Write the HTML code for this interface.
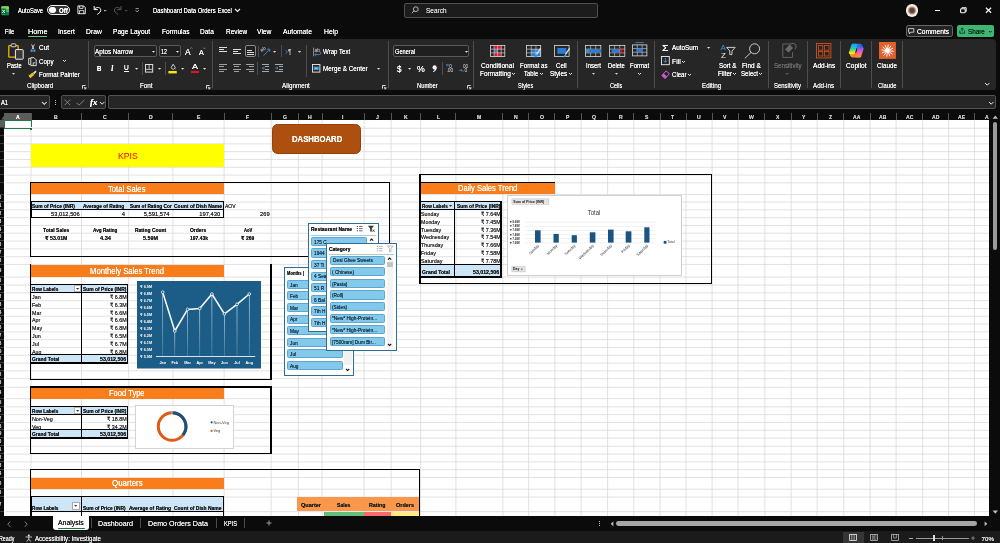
<!DOCTYPE html>
<html><head><meta charset="utf-8"><title>Dashboard Data Orders Excel</title>
<style>
html,body{margin:0;padding:0;background:#0b0b0b;}
#app{opacity:.999;position:relative;width:1000px;height:543px;overflow:hidden;background:#0b0b0b;font-family:"Liberation Sans","DejaVu Sans",sans-serif;}
#app>div,#app>svg{position:absolute;}
#app>svg{overflow:visible;}
.t{white-space:nowrap;transform-origin:0 50%;text-shadow:0 0 .45px;}
.d{text-shadow:0 0 .25px;}
.n{text-shadow:none;}
</style></head><body><div id="app">
<div style="left:4.2px;top:120px;width:985px;height:395.8px;background:#fff;"></div>
<svg style="left:4.2px;top:120px;" width="985" height="395.8" viewBox="0 0 985 395.8"><path d="M27 0V395.8M77.5 0V395.8M124.7 0V395.8M168.9 0V395.8M220.1 0V395.8M267.1 0V395.8M294.4 0V395.8M318.1 0V395.8M360.1 0V395.8M387.1 0V395.8M416.6 0V395.8M451.9 0V395.8M498.9 0V395.8M524.7 0V395.8M550.9 0V395.8M577.1 0V395.8M603.6 0V395.8M629.8 0V395.8M656.1 0V395.8M682 0V395.8M708.1 0V395.8M734.1 0V395.8M760.9 0V395.8M787.1 0V395.8M813.1 0V395.8M839.8 0V395.8M866.1 0V395.8M892.1 0V395.8M918.7 0V395.8M944.6 0V395.8M970.4 0V395.8M1.5 8.25H985M1.5 16.05H985M1.5 23.85H985M1.5 31.65H985M1.5 39.45H985M1.5 47.25H985M1.5 55.05H985M1.5 62.85H985M1.5 74.55H985M1.5 82.05H985M1.5 89.85H985M1.5 97.65H985M1.5 105.45H985M1.5 113.25H985M1.5 121.05H985M1.5 128.85H985M1.5 136.65H985M1.5 144.45H985M1.5 157.05H985M1.5 165.05H985M1.5 172.85H985M1.5 180.65H985M1.5 188.45H985M1.5 196.25H985M1.5 204.05H985M1.5 211.85H985M1.5 219.65H985M1.5 227.45H985M1.5 235.25H985M1.5 243.05H985M1.5 250.85H985M1.5 258.65H985M1.5 267.25H985M1.5 278.65H985M1.5 286.85H985M1.5 294.65H985M1.5 302.45H985M1.5 310.25H985M1.5 318.05H985M1.5 326.25H985M1.5 334.05H985M1.5 341.85H985M1.5 349.65H985M1.5 357.45H985M1.5 369.25H985M1.5 377.05H985M1.5 391.65H985" stroke="#d4d4d4" stroke-width="0.7" fill="none"/></svg>
<div style="left:0px;top:112.6px;width:1000px;height:7.4px;background:#0b0b0b;"></div>
<div style="left:4.2px;top:113px;width:26.7px;height:7px;background:#5c5c5c;"></div>
<div class="t" style="left:15.7px;top:114px;font-size:5.4px;line-height:6px;color:#fff;font-weight:bold;transform:scaleX(0.950);">A</div>
<div class="t" style="left:54.3px;top:114px;font-size:5.4px;line-height:6px;color:#c8c8c8;font-weight:bold;transform:scaleX(0.950);">B</div>
<div style="left:30.5px;top:113.4px;width:0.8px;height:6.6px;background:#555;"></div>
<div class="t" style="left:103.15px;top:114px;font-size:5.4px;line-height:6px;color:#c8c8c8;font-weight:bold;transform:scaleX(0.950);">C</div>
<div style="left:81px;top:113.4px;width:0.8px;height:6.6px;background:#555;"></div>
<div class="t" style="left:148.85px;top:114px;font-size:5.4px;line-height:6px;color:#c8c8c8;font-weight:bold;transform:scaleX(0.950);">D</div>
<div style="left:128.2px;top:113.4px;width:0.8px;height:6.6px;background:#555;"></div>
<div class="t" style="left:196.69px;top:114px;font-size:5.4px;line-height:6px;color:#c8c8c8;font-weight:bold;transform:scaleX(0.950);">E</div>
<div style="left:172.4px;top:113.4px;width:0.8px;height:6.6px;background:#555;"></div>
<div class="t" style="left:245.93px;top:114px;font-size:5.4px;line-height:6px;color:#c8c8c8;font-weight:bold;transform:scaleX(0.950);">F</div>
<div style="left:223.6px;top:113.4px;width:0.8px;height:6.6px;background:#555;"></div>
<div class="t" style="left:282.65px;top:114px;font-size:5.4px;line-height:6px;color:#c8c8c8;font-weight:bold;transform:scaleX(0.950);">G</div>
<div style="left:270.6px;top:113.4px;width:0.8px;height:6.6px;background:#555;"></div>
<div class="t" style="left:308.3px;top:114px;font-size:5.4px;line-height:6px;color:#c8c8c8;font-weight:bold;transform:scaleX(0.950);">H</div>
<div style="left:297.9px;top:113.4px;width:0.8px;height:6.6px;background:#555;"></div>
<div class="t" style="left:342.29px;top:114px;font-size:5.4px;line-height:6px;color:#c8c8c8;font-weight:bold;transform:scaleX(0.950);">I</div>
<div style="left:321.6px;top:113.4px;width:0.8px;height:6.6px;background:#555;"></div>
<div class="t" style="left:376.07px;top:114px;font-size:5.4px;line-height:6px;color:#c8c8c8;font-weight:bold;transform:scaleX(0.950);">J</div>
<div style="left:363.6px;top:113.4px;width:0.8px;height:6.6px;background:#555;"></div>
<div class="t" style="left:403.9px;top:114px;font-size:5.4px;line-height:6px;color:#c8c8c8;font-weight:bold;transform:scaleX(0.950);">K</div>
<div style="left:390.6px;top:113.4px;width:0.8px;height:6.6px;background:#555;"></div>
<div class="t" style="left:436.58px;top:114px;font-size:5.4px;line-height:6px;color:#c8c8c8;font-weight:bold;transform:scaleX(0.950);">L</div>
<div style="left:420.1px;top:113.4px;width:0.8px;height:6.6px;background:#555;"></div>
<div class="t" style="left:477.16px;top:114px;font-size:5.4px;line-height:6px;color:#c8c8c8;font-weight:bold;transform:scaleX(0.950);">M</div>
<div style="left:455.4px;top:113.4px;width:0.8px;height:6.6px;background:#555;"></div>
<div class="t" style="left:513.85px;top:114px;font-size:5.4px;line-height:6px;color:#c8c8c8;font-weight:bold;transform:scaleX(0.950);">N</div>
<div style="left:502.4px;top:113.4px;width:0.8px;height:6.6px;background:#555;"></div>
<div class="t" style="left:539.7px;top:114px;font-size:5.4px;line-height:6px;color:#c8c8c8;font-weight:bold;transform:scaleX(0.950);">O</div>
<div style="left:528.2px;top:113.4px;width:0.8px;height:6.6px;background:#555;"></div>
<div class="t" style="left:566.19px;top:114px;font-size:5.4px;line-height:6px;color:#c8c8c8;font-weight:bold;transform:scaleX(0.950);">P</div>
<div style="left:554.4px;top:113.4px;width:0.8px;height:6.6px;background:#555;"></div>
<div class="t" style="left:592.25px;top:114px;font-size:5.4px;line-height:6px;color:#c8c8c8;font-weight:bold;transform:scaleX(0.950);">Q</div>
<div style="left:580.6px;top:113.4px;width:0.8px;height:6.6px;background:#555;"></div>
<div class="t" style="left:618.75px;top:114px;font-size:5.4px;line-height:6px;color:#c8c8c8;font-weight:bold;transform:scaleX(0.950);">R</div>
<div style="left:607.1px;top:113.4px;width:0.8px;height:6.6px;background:#555;"></div>
<div class="t" style="left:645.14px;top:114px;font-size:5.4px;line-height:6px;color:#c8c8c8;font-weight:bold;transform:scaleX(0.950);">S</div>
<div style="left:633.3px;top:113.4px;width:0.8px;height:6.6px;background:#555;"></div>
<div class="t" style="left:671.38px;top:114px;font-size:5.4px;line-height:6px;color:#c8c8c8;font-weight:bold;transform:scaleX(0.950);">T</div>
<div style="left:659.6px;top:113.4px;width:0.8px;height:6.6px;background:#555;"></div>
<div class="t" style="left:697.1px;top:114px;font-size:5.4px;line-height:6px;color:#c8c8c8;font-weight:bold;transform:scaleX(0.950);">U</div>
<div style="left:685.5px;top:113.4px;width:0.8px;height:6.6px;background:#555;"></div>
<div class="t" style="left:723.29px;top:114px;font-size:5.4px;line-height:6px;color:#c8c8c8;font-weight:bold;transform:scaleX(0.950);">V</div>
<div style="left:711.6px;top:113.4px;width:0.8px;height:6.6px;background:#555;"></div>
<div class="t" style="left:748.98px;top:114px;font-size:5.4px;line-height:6px;color:#c8c8c8;font-weight:bold;transform:scaleX(0.950);">W</div>
<div style="left:737.6px;top:113.4px;width:0.8px;height:6.6px;background:#555;"></div>
<div class="t" style="left:776.19px;top:114px;font-size:5.4px;line-height:6px;color:#c8c8c8;font-weight:bold;transform:scaleX(0.950);">X</div>
<div style="left:764.4px;top:113.4px;width:0.8px;height:6.6px;background:#555;"></div>
<div class="t" style="left:802.29px;top:114px;font-size:5.4px;line-height:6px;color:#c8c8c8;font-weight:bold;transform:scaleX(0.950);">Y</div>
<div style="left:790.6px;top:113.4px;width:0.8px;height:6.6px;background:#555;"></div>
<div class="t" style="left:828.78px;top:114px;font-size:5.4px;line-height:6px;color:#c8c8c8;font-weight:bold;transform:scaleX(0.950);">Z</div>
<div style="left:816.6px;top:113.4px;width:0.8px;height:6.6px;background:#555;"></div>
<div class="t" style="left:853.15px;top:114px;font-size:5.4px;line-height:6px;color:#c8c8c8;font-weight:bold;transform:scaleX(0.950);">AA</div>
<div style="left:843.3px;top:113.4px;width:0.8px;height:6.6px;background:#555;"></div>
<div class="t" style="left:879.3px;top:114px;font-size:5.4px;line-height:6px;color:#c8c8c8;font-weight:bold;transform:scaleX(0.950);">AB</div>
<div style="left:869.6px;top:113.4px;width:0.8px;height:6.6px;background:#555;"></div>
<div class="t" style="left:905.6px;top:114px;font-size:5.4px;line-height:6px;color:#c8c8c8;font-weight:bold;transform:scaleX(0.950);">AC</div>
<div style="left:895.6px;top:113.4px;width:0.8px;height:6.6px;background:#555;"></div>
<div class="t" style="left:931.85px;top:114px;font-size:5.4px;line-height:6px;color:#c8c8c8;font-weight:bold;transform:scaleX(0.950);">AD</div>
<div style="left:922.2px;top:113.4px;width:0.8px;height:6.6px;background:#555;"></div>
<div class="t" style="left:957.84px;top:114px;font-size:5.4px;line-height:6px;color:#c8c8c8;font-weight:bold;transform:scaleX(0.950);">AE</div>
<div style="left:948.1px;top:113.4px;width:0.8px;height:6.6px;background:#555;"></div>
<div class="t" style="left:984.8px;top:114px;font-size:5.4px;line-height:6px;color:#c8c8c8;font-weight:bold;transform:scaleX(0.950);">AF</div>
<div style="left:973.9px;top:113.4px;width:0.8px;height:6.6px;background:#555;"></div>
<div style="left:0px;top:120px;width:4.2px;height:395.8px;background:#0b0b0b;"></div>
<div style="left:0px;top:120px;width:4.2px;height:7.8px;background:#5c5c5c;"></div>
<div style="left:0px;top:127.4px;width:3.6px;height:0.8px;background:#3a3a3a;"></div>
<div style="left:0px;top:135.2px;width:3.6px;height:0.8px;background:#3a3a3a;"></div>
<div style="left:0px;top:143px;width:3.6px;height:0.8px;background:#3a3a3a;"></div>
<div style="left:0px;top:150.8px;width:3.6px;height:0.8px;background:#3a3a3a;"></div>
<div style="left:0px;top:158.6px;width:3.6px;height:0.8px;background:#3a3a3a;"></div>
<div style="left:0px;top:166.4px;width:3.6px;height:0.8px;background:#3a3a3a;"></div>
<div style="left:0px;top:174.2px;width:3.6px;height:0.8px;background:#3a3a3a;"></div>
<div style="left:0px;top:182px;width:3.6px;height:0.8px;background:#3a3a3a;"></div>
<div style="left:0px;top:193.7px;width:3.6px;height:0.8px;background:#3a3a3a;"></div>
<div style="left:0px;top:201.2px;width:3.6px;height:0.8px;background:#3a3a3a;"></div>
<div style="left:0px;top:209px;width:3.6px;height:0.8px;background:#3a3a3a;"></div>
<div style="left:0px;top:216.8px;width:3.6px;height:0.8px;background:#3a3a3a;"></div>
<div style="left:0px;top:224.6px;width:3.6px;height:0.8px;background:#3a3a3a;"></div>
<div style="left:0px;top:232.4px;width:3.6px;height:0.8px;background:#3a3a3a;"></div>
<div style="left:0px;top:240.2px;width:3.6px;height:0.8px;background:#3a3a3a;"></div>
<div style="left:0px;top:248px;width:3.6px;height:0.8px;background:#3a3a3a;"></div>
<div style="left:0px;top:255.8px;width:3.6px;height:0.8px;background:#3a3a3a;"></div>
<div style="left:0px;top:263.6px;width:3.6px;height:0.8px;background:#3a3a3a;"></div>
<div style="left:0px;top:276.2px;width:3.6px;height:0.8px;background:#3a3a3a;"></div>
<div style="left:0px;top:284.2px;width:3.6px;height:0.8px;background:#3a3a3a;"></div>
<div style="left:0px;top:292px;width:3.6px;height:0.8px;background:#3a3a3a;"></div>
<div style="left:0px;top:299.8px;width:3.6px;height:0.8px;background:#3a3a3a;"></div>
<div style="left:0px;top:307.6px;width:3.6px;height:0.8px;background:#3a3a3a;"></div>
<div style="left:0px;top:315.4px;width:3.6px;height:0.8px;background:#3a3a3a;"></div>
<div style="left:0px;top:323.2px;width:3.6px;height:0.8px;background:#3a3a3a;"></div>
<div style="left:0px;top:331px;width:3.6px;height:0.8px;background:#3a3a3a;"></div>
<div style="left:0px;top:338.8px;width:3.6px;height:0.8px;background:#3a3a3a;"></div>
<div style="left:0px;top:346.6px;width:3.6px;height:0.8px;background:#3a3a3a;"></div>
<div style="left:0px;top:354.4px;width:3.6px;height:0.8px;background:#3a3a3a;"></div>
<div style="left:0px;top:362.2px;width:3.6px;height:0.8px;background:#3a3a3a;"></div>
<div style="left:0px;top:370px;width:3.6px;height:0.8px;background:#3a3a3a;"></div>
<div style="left:0px;top:377.8px;width:3.6px;height:0.8px;background:#3a3a3a;"></div>
<div style="left:0px;top:386.4px;width:3.6px;height:0.8px;background:#3a3a3a;"></div>
<div style="left:0px;top:397.8px;width:3.6px;height:0.8px;background:#3a3a3a;"></div>
<div style="left:0px;top:406px;width:3.6px;height:0.8px;background:#3a3a3a;"></div>
<div style="left:0px;top:413.8px;width:3.6px;height:0.8px;background:#3a3a3a;"></div>
<div style="left:0px;top:421.6px;width:3.6px;height:0.8px;background:#3a3a3a;"></div>
<div style="left:0px;top:429.4px;width:3.6px;height:0.8px;background:#3a3a3a;"></div>
<div style="left:0px;top:437.2px;width:3.6px;height:0.8px;background:#3a3a3a;"></div>
<div style="left:0px;top:445.4px;width:3.6px;height:0.8px;background:#3a3a3a;"></div>
<div style="left:0px;top:453.2px;width:3.6px;height:0.8px;background:#3a3a3a;"></div>
<div style="left:0px;top:461px;width:3.6px;height:0.8px;background:#3a3a3a;"></div>
<div style="left:0px;top:468.8px;width:3.6px;height:0.8px;background:#3a3a3a;"></div>
<div style="left:0px;top:476.6px;width:3.6px;height:0.8px;background:#3a3a3a;"></div>
<div style="left:0px;top:488.4px;width:3.6px;height:0.8px;background:#3a3a3a;"></div>
<div style="left:0px;top:496.2px;width:3.6px;height:0.8px;background:#3a3a3a;"></div>
<div style="left:0px;top:510.8px;width:3.6px;height:0.8px;background:#3a3a3a;"></div>
<div class="t" style="left:-0.6px;top:195px;font-size:4.6px;line-height:5px;color:#c4c4c4;font-weight:bold;transform:scaleX(0.900);">0</div>
<div class="t" style="left:-0.6px;top:203px;font-size:4.6px;line-height:5px;color:#c4c4c4;font-weight:bold;transform:scaleX(0.900);">1</div>
<div class="t" style="left:-0.6px;top:211px;font-size:4.6px;line-height:5px;color:#c4c4c4;font-weight:bold;transform:scaleX(0.900);">2</div>
<div class="t" style="left:-0.6px;top:219px;font-size:4.6px;line-height:5px;color:#c4c4c4;font-weight:bold;transform:scaleX(0.900);">3</div>
<div class="t" style="left:-0.6px;top:227px;font-size:4.6px;line-height:5px;color:#c4c4c4;font-weight:bold;transform:scaleX(0.900);">4</div>
<div class="t" style="left:-0.6px;top:234px;font-size:4.6px;line-height:5px;color:#c4c4c4;font-weight:bold;transform:scaleX(0.900);">5</div>
<div class="t" style="left:-0.6px;top:242px;font-size:4.6px;line-height:5px;color:#c4c4c4;font-weight:bold;transform:scaleX(0.900);">6</div>
<div class="t" style="left:-0.6px;top:250px;font-size:4.6px;line-height:5px;color:#c4c4c4;font-weight:bold;transform:scaleX(0.900);">7</div>
<div class="t" style="left:-0.6px;top:258px;font-size:4.6px;line-height:5px;color:#c4c4c4;font-weight:bold;transform:scaleX(0.900);">8</div>
<div class="t" style="left:-0.6px;top:268px;font-size:4.6px;line-height:5px;color:#c4c4c4;font-weight:bold;transform:scaleX(0.900);">9</div>
<div class="t" style="left:-0.6px;top:278px;font-size:4.6px;line-height:5px;color:#c4c4c4;font-weight:bold;transform:scaleX(0.900);">0</div>
<div class="t" style="left:-0.6px;top:286px;font-size:4.6px;line-height:5px;color:#c4c4c4;font-weight:bold;transform:scaleX(0.900);">1</div>
<div class="t" style="left:-0.6px;top:294px;font-size:4.6px;line-height:5px;color:#c4c4c4;font-weight:bold;transform:scaleX(0.900);">2</div>
<div class="t" style="left:-0.6px;top:302px;font-size:4.6px;line-height:5px;color:#c4c4c4;font-weight:bold;transform:scaleX(0.900);">3</div>
<div class="t" style="left:-0.6px;top:310px;font-size:4.6px;line-height:5px;color:#c4c4c4;font-weight:bold;transform:scaleX(0.900);">4</div>
<div class="t" style="left:-0.6px;top:317px;font-size:4.6px;line-height:5px;color:#c4c4c4;font-weight:bold;transform:scaleX(0.900);">5</div>
<div class="t" style="left:-0.6px;top:325px;font-size:4.6px;line-height:5px;color:#c4c4c4;font-weight:bold;transform:scaleX(0.900);">6</div>
<div class="t" style="left:-0.6px;top:333px;font-size:4.6px;line-height:5px;color:#c4c4c4;font-weight:bold;transform:scaleX(0.900);">7</div>
<div class="t" style="left:-0.6px;top:341px;font-size:4.6px;line-height:5px;color:#c4c4c4;font-weight:bold;transform:scaleX(0.900);">8</div>
<div class="t" style="left:-0.6px;top:349px;font-size:4.6px;line-height:5px;color:#c4c4c4;font-weight:bold;transform:scaleX(0.900);">9</div>
<div class="t" style="left:-0.6px;top:356px;font-size:4.6px;line-height:5px;color:#c4c4c4;font-weight:bold;transform:scaleX(0.900);">0</div>
<div class="t" style="left:-0.6px;top:364px;font-size:4.6px;line-height:5px;color:#c4c4c4;font-weight:bold;transform:scaleX(0.900);">1</div>
<div class="t" style="left:-0.6px;top:372px;font-size:4.6px;line-height:5px;color:#c4c4c4;font-weight:bold;transform:scaleX(0.900);">2</div>
<div class="t" style="left:-0.6px;top:380px;font-size:4.6px;line-height:5px;color:#c4c4c4;font-weight:bold;transform:scaleX(0.900);">3</div>
<div class="t" style="left:-0.6px;top:390px;font-size:4.6px;line-height:5px;color:#c4c4c4;font-weight:bold;transform:scaleX(0.900);">4</div>
<div class="t" style="left:-0.6px;top:400px;font-size:4.6px;line-height:5px;color:#c4c4c4;font-weight:bold;transform:scaleX(0.900);">5</div>
<div class="t" style="left:-0.6px;top:408px;font-size:4.6px;line-height:5px;color:#c4c4c4;font-weight:bold;transform:scaleX(0.900);">6</div>
<div class="t" style="left:-0.6px;top:416px;font-size:4.6px;line-height:5px;color:#c4c4c4;font-weight:bold;transform:scaleX(0.900);">7</div>
<div class="t" style="left:-0.6px;top:424px;font-size:4.6px;line-height:5px;color:#c4c4c4;font-weight:bold;transform:scaleX(0.900);">8</div>
<div class="t" style="left:-0.6px;top:431px;font-size:4.6px;line-height:5px;color:#c4c4c4;font-weight:bold;transform:scaleX(0.900);">9</div>
<div class="t" style="left:-0.6px;top:439px;font-size:4.6px;line-height:5px;color:#c4c4c4;font-weight:bold;transform:scaleX(0.900);">0</div>
<div class="t" style="left:-0.6px;top:447px;font-size:4.6px;line-height:5px;color:#c4c4c4;font-weight:bold;transform:scaleX(0.900);">1</div>
<div class="t" style="left:-0.6px;top:455px;font-size:4.6px;line-height:5px;color:#c4c4c4;font-weight:bold;transform:scaleX(0.900);">2</div>
<div class="t" style="left:-0.6px;top:463px;font-size:4.6px;line-height:5px;color:#c4c4c4;font-weight:bold;transform:scaleX(0.900);">3</div>
<div class="t" style="left:-0.6px;top:471px;font-size:4.6px;line-height:5px;color:#c4c4c4;font-weight:bold;transform:scaleX(0.900);">4</div>
<div class="t" style="left:-0.6px;top:481px;font-size:4.6px;line-height:5px;color:#c4c4c4;font-weight:bold;transform:scaleX(0.900);">5</div>
<div class="t" style="left:-0.6px;top:490px;font-size:4.6px;line-height:5px;color:#c4c4c4;font-weight:bold;transform:scaleX(0.900);">6</div>
<div class="t" style="left:-0.6px;top:502px;font-size:4.6px;line-height:5px;color:#c4c4c4;font-weight:bold;transform:scaleX(0.900);">7</div>
<div style="left:0px;top:112.6px;width:4.2px;height:7.4px;background:#0b0b0b;"></div>
<svg style="left:0.6px;top:114.6px;" width="3.6" height="5" viewBox="0 0 3.6 5"><path d="M3.4 0.6 V4.4 H0.2 Z" fill="#666"/></svg>
<div style="left:989.2px;top:112.6px;width:10.8px;height:403.2px;background:#0b0b0b;"></div>
<svg style="left:991.6px;top:115.4px;" width="6.6" height="4.2" viewBox="0 0 6.6 4.2"><path d="M0.6 3.8 L3.3 0.4 L6 3.8 Z" fill="#bbb"/></svg>
<div style="left:992.9px;top:122px;width:4px;height:128.4px;background:#9b9b9b;border-radius:2px;"></div>
<svg style="left:991.6px;top:510.4px;" width="6.6" height="4.4" viewBox="0 0 6.6 4.4"><path d="M0.6 0.4 L3.3 3.8 L6 0.4 Z" fill="#bbb"/></svg>
<div style="left:4px;top:120px;width:27.6px;height:9px;border:1.2px solid #1f7a45;box-sizing:border-box;"></div>
<div style="left:29.6px;top:127.2px;width:2.6px;height:2.8px;background:#fff;"></div>
<div style="left:30px;top:127.6px;width:2px;height:2.2px;background:#1b6b3c;"></div>
<div style="left:272.2px;top:123.9px;width:89px;height:30.2px;background:#ad4f0e;border:0.8px solid #93420b;box-sizing:border-box;border-radius:5.5px;"></div>
<div class="t" style="left:291.54px;top:134px;font-size:8.6px;line-height:10px;color:#fff;font-weight:bold;transform:scaleX(0.900);">DASHBOARD</div>
<div style="left:30.5px;top:143.9px;width:193.5px;height:23.3px;background:#ffff00;"></div>
<div class="t n" style="left:117.5px;top:150px;font-size:9.9px;line-height:11px;color:#ff0000;transform:scaleX(0.882);">KPIS</div>
<div style="left:30px;top:182.05px;width:360.3px;height:1.3px;background:#000;"></div>
<div style="left:30px;top:255.95px;width:360.3px;height:1.1px;background:#000;"></div>
<div style="left:30.05px;top:182.1px;width:1.1px;height:75px;background:#000;"></div>
<div style="left:388.9px;top:182.1px;width:1.6px;height:75px;background:#000;"></div>
<div style="left:31.1px;top:183.3px;width:192.9px;height:10.8px;background:#f97d1b;"></div>
<div class="t" style="left:108.3px;top:184px;font-size:8.6px;line-height:10px;color:#fff;transform:scaleX(0.891);">Total Sales</div>
<div style="left:31.3px;top:201.6px;width:192.7px;height:7.8px;background:#cde6f7;"></div>
<div style="left:30.6px;top:201.15px;width:193.8px;height:0.9px;background:#000;"></div>
<div style="left:30.6px;top:209px;width:193.8px;height:0.8px;background:#000;"></div>
<div style="left:30.6px;top:216.5px;width:193.8px;height:1.4px;background:#000;"></div>
<div style="left:30.55px;top:201.6px;width:0.9px;height:15.6px;background:#000;"></div>
<div style="left:222.9px;top:201.6px;width:1.4px;height:16.2px;background:#000;"></div>
<div class="t" style="left:32px;top:203px;font-size:5.6px;line-height:6px;color:#1c1c1c;font-weight:bold;transform:scaleX(0.875);">Sum of Price (INR)</div>
<div class="t" style="left:83px;top:203px;font-size:5.6px;line-height:6px;color:#1c1c1c;font-weight:bold;transform:scaleX(0.866);">Average of Rating</div>
<div class="t" style="left:130px;top:203px;font-size:5.6px;line-height:6px;color:#1c1c1c;font-weight:bold;transform:scaleX(0.850);">Sum of Rating Cor</div>
<div class="t" style="left:173.8px;top:203px;font-size:5.6px;line-height:6px;color:#1c1c1c;font-weight:bold;transform:scaleX(0.897);">Count of Dish Name</div>
<div class="t" style="left:225px;top:203px;font-size:5.4px;line-height:6px;color:#2a2a2a;transform:scaleX(0.921);">AOV</div>
<div class="t" style="left:50.56px;top:211px;font-size:5.8px;line-height:6px;color:#2a2a2a;transform:scaleX(0.990);">53,012,506</div>
<div class="t" style="left:121.77px;top:211px;font-size:5.8px;line-height:6px;color:#2a2a2a;">4</div>
<div class="t" style="left:143.75px;top:211px;font-size:5.8px;line-height:6px;color:#2a2a2a;">5,591,574</div>
<div class="t" style="left:199.24px;top:211px;font-size:5.8px;line-height:6px;color:#2a2a2a;">197,430</div>
<div class="t" style="left:260.42px;top:211px;font-size:5.8px;line-height:6px;color:#2a2a2a;transform:scaleX(0.990);">269</div>
<div class="t" style="left:43px;top:227px;font-size:5.6px;line-height:6px;color:#1c1c1c;font-weight:bold;transform:scaleX(0.902);">Total Sales</div>
<div class="t" style="left:93px;top:227px;font-size:5.6px;line-height:6px;color:#1c1c1c;font-weight:bold;transform:scaleX(0.835);">Avg Rating</div>
<div class="t" style="left:135px;top:227px;font-size:5.6px;line-height:6px;color:#1c1c1c;font-weight:bold;transform:scaleX(0.891);">Rating Count</div>
<div class="t" style="left:190px;top:227px;font-size:5.6px;line-height:6px;color:#1c1c1c;font-weight:bold;transform:scaleX(0.888);">Orders</div>
<div class="t" style="left:244.3px;top:227px;font-size:5.6px;line-height:6px;color:#1c1c1c;font-weight:bold;transform:scaleX(0.732);">AoV</div>
<div class="t" style="left:45px;top:235px;font-size:5.6px;line-height:6px;color:#1c1c1c;font-weight:bold;transform:scaleX(0.932);">₹ 53.01M</div>
<div class="t" style="left:100px;top:235px;font-size:5.6px;line-height:6px;color:#1c1c1c;font-weight:bold;">4.34</div>
<div class="t" style="left:143px;top:235px;font-size:5.6px;line-height:6px;color:#1c1c1c;font-weight:bold;transform:scaleX(0.964);">5.59M</div>
<div class="t" style="left:189.5px;top:235px;font-size:5.6px;line-height:6px;color:#1c1c1c;font-weight:bold;transform:scaleX(0.889);">197.43k</div>
<div class="t" style="left:240.5px;top:235px;font-size:5.6px;line-height:6px;color:#1c1c1c;font-weight:bold;transform:scaleX(0.899);">₹ 269</div>
<div style="left:30px;top:378.5px;width:241.5px;height:1.2px;background:#000;"></div>
<div style="left:30.05px;top:264.3px;width:1.1px;height:115.4px;background:#000;"></div>
<div style="left:270.2px;top:264.3px;width:1.4px;height:115.4px;background:#000;"></div>
<div style="left:31.1px;top:264.9px;width:192.7px;height:11.9px;background:#f97d1b;"></div>
<div class="t" style="left:89.7px;top:266px;font-size:8.6px;line-height:10px;color:#fff;transform:scaleX(0.891);">Monthely Sales Trend</div>
<div style="left:31.3px;top:284.6px;width:96px;height:7.8px;background:#cde6f7;"></div>
<div style="left:73.8px;top:285.4px;width:7px;height:6.4px;background:#fff;border:0.5px solid #b5b5b5;box-sizing:border-box;"></div>
<div class="t" style="left:32.2px;top:286px;font-size:5.6px;line-height:6px;color:#1c1c1c;font-weight:bold;transform:scaleX(0.845);">Row Labels</div>
<svg style="left:75.65px;top:287.89px;" width="3.3" height="1.82" viewBox="0 0 3.3 1.82"><path d="M0 0 L3.3 0 L1.65 1.81 Z" fill="#333"/></svg>
<div class="t" style="left:83.2px;top:286px;font-size:5.6px;line-height:6px;color:#1c1c1c;font-weight:bold;transform:scaleX(0.883);">Sum of Price (INR)</div>
<div class="t d" style="left:32px;top:294px;font-size:5.8px;line-height:6px;color:#2a2a2a;transform:scaleX(0.920);">Jan</div>
<div class="t d" style="left:109.96px;top:294px;font-size:5.8px;line-height:6px;color:#2a2a2a;transform:scaleX(0.920);">₹ 6.8M</div>
<div class="t d" style="left:32px;top:302px;font-size:5.8px;line-height:6px;color:#2a2a2a;transform:scaleX(0.920);">Feb</div>
<div class="t d" style="left:109.96px;top:302px;font-size:5.8px;line-height:6px;color:#2a2a2a;transform:scaleX(0.920);">₹ 6.3M</div>
<div class="t d" style="left:32px;top:310px;font-size:5.8px;line-height:6px;color:#2a2a2a;transform:scaleX(0.920);">Mar</div>
<div class="t d" style="left:109.96px;top:310px;font-size:5.8px;line-height:6px;color:#2a2a2a;transform:scaleX(0.920);">₹ 6.6M</div>
<div class="t d" style="left:32px;top:317px;font-size:5.8px;line-height:6px;color:#2a2a2a;transform:scaleX(0.920);">Apr</div>
<div class="t d" style="left:109.96px;top:317px;font-size:5.8px;line-height:6px;color:#2a2a2a;transform:scaleX(0.920);">₹ 6.6M</div>
<div class="t d" style="left:32px;top:325px;font-size:5.8px;line-height:6px;color:#2a2a2a;transform:scaleX(0.920);">May</div>
<div class="t d" style="left:109.96px;top:325px;font-size:5.8px;line-height:6px;color:#2a2a2a;transform:scaleX(0.920);">₹ 6.8M</div>
<div class="t d" style="left:32px;top:333px;font-size:5.8px;line-height:6px;color:#2a2a2a;transform:scaleX(0.920);">Jun</div>
<div class="t d" style="left:109.96px;top:333px;font-size:5.8px;line-height:6px;color:#2a2a2a;transform:scaleX(0.920);">₹ 6.5M</div>
<div class="t d" style="left:32px;top:341px;font-size:5.8px;line-height:6px;color:#2a2a2a;transform:scaleX(0.920);">Jul</div>
<div class="t d" style="left:109.96px;top:341px;font-size:5.8px;line-height:6px;color:#2a2a2a;transform:scaleX(0.920);">₹ 6.7M</div>
<div class="t d" style="left:32px;top:349px;font-size:5.8px;line-height:6px;color:#2a2a2a;transform:scaleX(0.920);">Aug</div>
<div class="t d" style="left:109.96px;top:349px;font-size:5.8px;line-height:6px;color:#2a2a2a;transform:scaleX(0.920);">₹ 6.8M</div>
<div style="left:31.3px;top:355.3px;width:49.7px;height:7.3px;background:#cde6f7;"></div>
<div style="left:82.4px;top:355.3px;width:44.9px;height:7.3px;background:#cde6f7;"></div>
<div class="t" style="left:32.2px;top:356px;font-size:5.6px;line-height:6px;color:#1c1c1c;font-weight:bold;transform:scaleX(0.880);">Grand Total</div>
<div class="t" style="left:99.67px;top:356px;font-size:5.8px;line-height:6px;color:#1c1c1c;font-weight:bold;transform:scaleX(0.900);">53,012,506</div>
<div style="left:30.7px;top:284.1px;width:97.2px;height:1px;background:#000;"></div>
<div style="left:30.7px;top:291.95px;width:97.2px;height:0.9px;background:#000;"></div>
<div style="left:30.7px;top:354.3px;width:97.2px;height:1px;background:#000;"></div>
<div style="left:30.7px;top:362.28px;width:97.2px;height:1.25px;background:#000;"></div>
<div style="left:81.02px;top:284.6px;width:1.15px;height:78px;background:#000;"></div>
<div style="left:126.67px;top:284.6px;width:1.25px;height:78.9px;background:#000;"></div>
<svg style="left:136.8px;top:281px;font-family:'Liberation Sans','DejaVu Sans',sans-serif;" width="124" height="87.5" viewBox="0 0 124 87.5"><defs><linearGradient id="dl" x1="0" y1="0" x2="0" y2="1"><stop offset="0" stop-color="#d8e6ef" stop-opacity="0.95"/><stop offset="1" stop-color="#d8e6ef" stop-opacity="0.25"/></linearGradient></defs><rect width="124" height="87.5" fill="#1c5d87"/><rect x="25.35" y="11.2" width="0.7" height="64.3" fill="url(#dl)"/><rect x="37.45" y="50" width="0.7" height="25.5" fill="url(#dl)"/><rect x="50.25" y="28.4" width="0.7" height="47.1" fill="url(#dl)"/><rect x="62.35" y="27.5" width="0.7" height="48" fill="url(#dl)"/><rect x="74.55" y="13" width="0.7" height="62.5" fill="url(#dl)"/><rect x="87.05" y="32.9" width="0.7" height="42.6" fill="url(#dl)"/><rect x="99.65" y="23.3" width="0.7" height="52.2" fill="url(#dl)"/><rect x="111.95" y="13" width="0.7" height="62.5" fill="url(#dl)"/><path d="M19 75.5H118.2" stroke="#eef3f6" stroke-width="0.9"/><polyline points="25.7,11.2 37.8,50 50.6,28.4 62.7,27.5 74.9,13 87.4,32.9 100,23.3 112.3,13" fill="none" stroke="#fff" stroke-width="1.5" stroke-linejoin="round"/><circle cx="25.7" cy="11.2" r="1.35" fill="#1c5d87" stroke="#fff" stroke-width="0.75"/><circle cx="37.8" cy="50" r="1.35" fill="#1c5d87" stroke="#fff" stroke-width="0.75"/><circle cx="50.6" cy="28.4" r="1.35" fill="#1c5d87" stroke="#fff" stroke-width="0.75"/><circle cx="62.7" cy="27.5" r="1.35" fill="#1c5d87" stroke="#fff" stroke-width="0.75"/><circle cx="74.9" cy="13" r="1.35" fill="#1c5d87" stroke="#fff" stroke-width="0.75"/><circle cx="87.4" cy="32.9" r="1.35" fill="#1c5d87" stroke="#fff" stroke-width="0.75"/><circle cx="100" cy="23.3" r="1.35" fill="#1c5d87" stroke="#fff" stroke-width="0.75"/><circle cx="112.3" cy="13" r="1.35" fill="#1c5d87" stroke="#fff" stroke-width="0.75"/><text x="3.1" y="6.8" font-size="3.7" font-weight="bold" fill="#fff" textLength="12" lengthAdjust="spacingAndGlyphs">₹ 6.9M</text><text x="3.1" y="13.8" font-size="3.7" font-weight="bold" fill="#fff" textLength="12" lengthAdjust="spacingAndGlyphs">₹ 6.8M</text><text x="3.1" y="20.8" font-size="3.7" font-weight="bold" fill="#fff" textLength="12" lengthAdjust="spacingAndGlyphs">₹ 6.7M</text><text x="3.1" y="27.8" font-size="3.7" font-weight="bold" fill="#fff" textLength="12" lengthAdjust="spacingAndGlyphs">₹ 6.6M</text><text x="3.1" y="34.8" font-size="3.7" font-weight="bold" fill="#fff" textLength="12" lengthAdjust="spacingAndGlyphs">₹ 6.5M</text><text x="3.1" y="41.8" font-size="3.7" font-weight="bold" fill="#fff" textLength="12" lengthAdjust="spacingAndGlyphs">₹ 6.4M</text><text x="3.1" y="48.8" font-size="3.7" font-weight="bold" fill="#fff" textLength="12" lengthAdjust="spacingAndGlyphs">₹ 6.3M</text><text x="3.1" y="55.8" font-size="3.7" font-weight="bold" fill="#fff" textLength="12" lengthAdjust="spacingAndGlyphs">₹ 6.2M</text><text x="3.1" y="62.8" font-size="3.7" font-weight="bold" fill="#fff" textLength="12" lengthAdjust="spacingAndGlyphs">₹ 6.1M</text><text x="3.1" y="69.8" font-size="3.7" font-weight="bold" fill="#fff" textLength="12" lengthAdjust="spacingAndGlyphs">₹ 6.0M</text><text x="3.1" y="76.8" font-size="3.7" font-weight="bold" fill="#fff" textLength="12" lengthAdjust="spacingAndGlyphs">₹ 5.9M</text><text x="25.7" y="82.9" font-size="3.8" font-weight="bold" fill="#fff" text-anchor="middle">Jan</text><text x="37.8" y="82.9" font-size="3.8" font-weight="bold" fill="#fff" text-anchor="middle">Feb</text><text x="50.6" y="82.9" font-size="3.8" font-weight="bold" fill="#fff" text-anchor="middle">Mar</text><text x="62.7" y="82.9" font-size="3.8" font-weight="bold" fill="#fff" text-anchor="middle">Apr</text><text x="74.9" y="82.9" font-size="3.8" font-weight="bold" fill="#fff" text-anchor="middle">May</text><text x="87.4" y="82.9" font-size="3.8" font-weight="bold" fill="#fff" text-anchor="middle">Jun</text><text x="100" y="82.9" font-size="3.8" font-weight="bold" fill="#fff" text-anchor="middle">Jul</text><text x="112.3" y="82.9" font-size="3.8" font-weight="bold" fill="#fff" text-anchor="middle">Aug</text></svg>
<div style="left:30px;top:386.25px;width:241.5px;height:1.3px;background:#000;"></div>
<div style="left:30px;top:452.95px;width:241.5px;height:1.1px;background:#000;"></div>
<div style="left:30.05px;top:386.3px;width:1.1px;height:67.8px;background:#000;"></div>
<div style="left:270.2px;top:386.3px;width:1.4px;height:67.8px;background:#000;"></div>
<div style="left:31.1px;top:387.5px;width:192.7px;height:11.4px;background:#f97d1b;"></div>
<div class="t" style="left:109.2px;top:388px;font-size:8.6px;line-height:10px;color:#fff;transform:scaleX(0.879);">Food Type</div>
<div style="left:31.3px;top:406.4px;width:96px;height:7.8px;background:#cde6f7;"></div>
<div style="left:73.8px;top:407.2px;width:7px;height:6.4px;background:#fff;border:0.5px solid #b5b5b5;box-sizing:border-box;"></div>
<div class="t" style="left:32.2px;top:408px;font-size:5.6px;line-height:6px;color:#1c1c1c;font-weight:bold;transform:scaleX(0.845);">Row Labels</div>
<svg style="left:75.65px;top:409.69px;" width="3.3" height="1.82" viewBox="0 0 3.3 1.82"><path d="M0 0 L3.3 0 L1.65 1.81 Z" fill="#333"/></svg>
<div class="t" style="left:83.2px;top:408px;font-size:5.6px;line-height:6px;color:#1c1c1c;font-weight:bold;transform:scaleX(0.883);">Sum of Price (INR)</div>
<div class="t d" style="left:32px;top:416px;font-size:5.8px;line-height:6px;color:#2a2a2a;transform:scaleX(0.920);">Non-Veg</div>
<div class="t d" style="left:106.99px;top:416px;font-size:5.8px;line-height:6px;color:#2a2a2a;transform:scaleX(0.920);">₹ 18.8M</div>
<div class="t d" style="left:32px;top:424px;font-size:5.8px;line-height:6px;color:#2a2a2a;transform:scaleX(0.920);">Veg</div>
<div class="t d" style="left:106.99px;top:424px;font-size:5.8px;line-height:6px;color:#2a2a2a;transform:scaleX(0.920);">₹ 34.2M</div>
<div style="left:31.3px;top:430.3px;width:49.7px;height:7.3px;background:#cde6f7;"></div>
<div style="left:82.4px;top:430.3px;width:44.9px;height:7.3px;background:#cde6f7;"></div>
<div class="t" style="left:32.2px;top:431px;font-size:5.6px;line-height:6px;color:#1c1c1c;font-weight:bold;transform:scaleX(0.880);">Grand Total</div>
<div class="t" style="left:99.67px;top:431px;font-size:5.8px;line-height:6px;color:#1c1c1c;font-weight:bold;transform:scaleX(0.900);">53,012,506</div>
<div style="left:30.7px;top:405.9px;width:97.2px;height:1px;background:#000;"></div>
<div style="left:30.7px;top:413.75px;width:97.2px;height:0.9px;background:#000;"></div>
<div style="left:30.7px;top:429.3px;width:97.2px;height:1px;background:#000;"></div>
<div style="left:30.7px;top:437.28px;width:97.2px;height:1.25px;background:#000;"></div>
<div style="left:81.02px;top:406.4px;width:1.15px;height:31.2px;background:#000;"></div>
<div style="left:126.67px;top:406.4px;width:1.25px;height:32.1px;background:#000;"></div>
<div style="left:135.2px;top:405.4px;width:99.3px;height:43.2px;background:#fff;border:0.8px solid #d4d4d4;box-sizing:border-box;"></div>
<svg style="left:150px;top:405px;font-family:'Liberation Sans',sans-serif;" width="84" height="44" viewBox="0 0 84 44"><circle cx="22.1" cy="21.5" r="13.8" fill="none" stroke="#e05a14" stroke-width="3"/><path d="M22.1 7.7 A13.8 13.8 0 0 1 33 29.96" fill="none" stroke="#16527f" stroke-width="3"/><path d="M22.1 5.7 V9.7" stroke="#fff" stroke-width="0.6"/><circle cx="61.6" cy="17.3" r="1.1" fill="#16527f"/><circle cx="61.6" cy="25.9" r="1.1" fill="#e05a14"/><text x="63.4" y="18.6" font-size="4" fill="#444">Non-Veg</text><text x="63.4" y="27.2" font-size="4" fill="#444">Veg</text></svg>
<div style="left:30px;top:469.05px;width:390.3px;height:1.1px;background:#000;"></div>
<div style="left:30.05px;top:469px;width:1.1px;height:56.8px;background:#000;"></div>
<div style="left:418.95px;top:469px;width:1.5px;height:56.8px;background:#000;"></div>
<div style="left:31.1px;top:477.7px;width:192.7px;height:11.2px;background:#f97d1b;"></div>
<div class="t" style="left:111.5px;top:478px;font-size:8.6px;line-height:10px;color:#fff;transform:scaleX(0.918);">Quarters</div>
<div style="left:31.3px;top:496.8px;width:192.5px;height:14.5px;background:#cde6f7;"></div>
<div style="left:30.6px;top:496.3px;width:193.8px;height:1px;background:#000;"></div>
<div style="left:30.6px;top:510.85px;width:193.8px;height:0.9px;background:#000;"></div>
<div style="left:30.55px;top:496.8px;width:0.9px;height:19px;background:#000;"></div>
<div style="left:80.8px;top:496.8px;width:1.2px;height:19px;background:#000;"></div>
<div style="left:222.95px;top:496.8px;width:1.3px;height:19px;background:#000;"></div>
<div class="t" style="left:32px;top:505px;font-size:5.6px;line-height:6px;color:#1c1c1c;font-weight:bold;transform:scaleX(0.852);">Row Labels</div>
<div style="left:72px;top:502px;width:7.6px;height:7.6px;background:#fff;border:0.6px solid #aaa;box-sizing:border-box;"></div>
<svg style="left:74.15px;top:505.09px;" width="3.3" height="1.82" viewBox="0 0 3.3 1.82"><path d="M0 0 L3.3 0 L1.65 1.81 Z" fill="#333"/></svg>
<div class="t" style="left:83px;top:505px;font-size:5.6px;line-height:6px;color:#1c1c1c;font-weight:bold;transform:scaleX(0.869);">Sum of Price (INR)</div>
<div class="t" style="left:129px;top:505px;font-size:5.6px;line-height:6px;color:#1c1c1c;font-weight:bold;transform:scaleX(0.880);">Average of Rating</div>
<div class="t" style="left:174px;top:505px;font-size:5.6px;line-height:6px;color:#1c1c1c;font-weight:bold;transform:scaleX(0.888);">Count of Dish Name</div>
<div style="left:297.2px;top:496.9px;width:121.7px;height:14.6px;background:#f9974a;"></div>
<div class="t" style="left:300.5px;top:502px;font-size:5.6px;line-height:6px;color:#222;font-weight:bold;transform:scaleX(0.989);">Quarter</div>
<div class="t" style="left:336.5px;top:502px;font-size:5.6px;line-height:6px;color:#222;font-weight:bold;transform:scaleX(0.922);">Sales</div>
<div class="t" style="left:368.5px;top:502px;font-size:5.6px;line-height:6px;color:#222;font-weight:bold;transform:scaleX(0.947);">Rating</div>
<div class="t" style="left:396px;top:502px;font-size:5.6px;line-height:6px;color:#222;font-weight:bold;transform:scaleX(0.980);">Orders</div>
<div style="left:324px;top:511.5px;width:39.5px;height:4.3px;background:#63be7b;"></div>
<div style="left:363.5px;top:511.5px;width:27.5px;height:4.3px;background:#f8696b;"></div>
<div style="left:391px;top:511.5px;width:27.9px;height:4.3px;background:#ffeb84;"></div>
<div style="left:419.4px;top:174.05px;width:293px;height:1.1px;background:#000;"></div>
<div style="left:419.4px;top:283.2px;width:293px;height:1.2px;background:#000;"></div>
<div style="left:419.2px;top:174px;width:1.6px;height:110.4px;background:#000;"></div>
<div style="left:711.1px;top:174px;width:1.4px;height:110.4px;background:#000;"></div>
<div style="left:420.7px;top:182.8px;width:134.1px;height:10.9px;background:#f97d1b;"></div>
<div style="left:420px;top:181.8px;width:134.8px;height:1px;background:#000;"></div>
<div class="t" style="left:457.8px;top:183px;font-size:8.6px;line-height:10px;color:#fff;transform:scaleX(0.881);">Daily Sales Trend</div>
<div style="left:420.6px;top:201.6px;width:80.4px;height:7.8px;background:#cde6f7;"></div>
<div class="t" style="left:422px;top:203px;font-size:5.6px;line-height:6px;color:#1c1c1c;font-weight:bold;transform:scaleX(0.832);">Row Labels</div>
<svg style="left:449.4px;top:205.02px;" width="3.2" height="1.76" viewBox="0 0 3.2 1.76"><path d="M0 0 L3.2 0 L1.6 1.76 Z" fill="#222"/></svg>
<div class="t" style="left:456.8px;top:203px;font-size:5.6px;line-height:6px;color:#1c1c1c;font-weight:bold;transform:scaleX(0.885);">Sum of Price (INR)</div>
<div class="t d" style="left:421.3px;top:211px;font-size:5.8px;line-height:6px;color:#2a2a2a;transform:scaleX(0.920);">Sunday</div>
<div class="t d" style="left:480.69px;top:211px;font-size:5.8px;line-height:6px;color:#2a2a2a;transform:scaleX(0.920);">₹ 7.64M</div>
<div class="t d" style="left:421.3px;top:219px;font-size:5.8px;line-height:6px;color:#2a2a2a;transform:scaleX(0.920);">Monday</div>
<div class="t d" style="left:480.69px;top:219px;font-size:5.8px;line-height:6px;color:#2a2a2a;transform:scaleX(0.920);">₹ 7.45M</div>
<div class="t d" style="left:421.3px;top:227px;font-size:5.8px;line-height:6px;color:#2a2a2a;transform:scaleX(0.920);">Tuesday</div>
<div class="t d" style="left:480.69px;top:227px;font-size:5.8px;line-height:6px;color:#2a2a2a;transform:scaleX(0.920);">₹ 7.36M</div>
<div class="t d" style="left:421.3px;top:234px;font-size:5.8px;line-height:6px;color:#2a2a2a;transform:scaleX(0.920);">Wednesday</div>
<div class="t d" style="left:480.69px;top:234px;font-size:5.8px;line-height:6px;color:#2a2a2a;transform:scaleX(0.920);">₹ 7.54M</div>
<div class="t d" style="left:421.3px;top:242px;font-size:5.8px;line-height:6px;color:#2a2a2a;transform:scaleX(0.920);">Thursday</div>
<div class="t d" style="left:480.69px;top:242px;font-size:5.8px;line-height:6px;color:#2a2a2a;transform:scaleX(0.920);">₹ 7.66M</div>
<div class="t d" style="left:421.3px;top:250px;font-size:5.8px;line-height:6px;color:#2a2a2a;transform:scaleX(0.920);">Friday</div>
<div class="t d" style="left:480.69px;top:250px;font-size:5.8px;line-height:6px;color:#2a2a2a;transform:scaleX(0.920);">₹ 7.58M</div>
<div class="t d" style="left:421.3px;top:258px;font-size:5.8px;line-height:6px;color:#2a2a2a;transform:scaleX(0.920);">Saturday</div>
<div class="t d" style="left:480.69px;top:258px;font-size:5.8px;line-height:6px;color:#2a2a2a;transform:scaleX(0.920);">₹ 7.78M</div>
<div style="left:420.6px;top:264.5px;width:33.3px;height:12.1px;background:#cde6f7;"></div>
<div style="left:455.3px;top:264.5px;width:45.7px;height:12.1px;background:#cde6f7;"></div>
<div class="t" style="left:421.5px;top:269px;font-size:5.6px;line-height:6px;color:#1c1c1c;font-weight:bold;transform:scaleX(0.903);">Grand Total</div>
<div class="t" style="left:473.37px;top:269px;font-size:5.8px;line-height:6px;color:#1c1c1c;font-weight:bold;transform:scaleX(0.900);">53,012,506</div>
<div style="left:420px;top:201.1px;width:81.6px;height:1px;background:#000;"></div>
<div style="left:420px;top:208.95px;width:81.6px;height:0.9px;background:#000;"></div>
<div style="left:420px;top:263.5px;width:81.6px;height:1px;background:#000;"></div>
<div style="left:420px;top:276.28px;width:81.6px;height:1.25px;background:#000;"></div>
<div style="left:419.9px;top:201.6px;width:1px;height:75px;background:#000;"></div>
<div style="left:453.93px;top:201.6px;width:1.15px;height:75px;background:#000;"></div>
<div style="left:500.38px;top:201.6px;width:1.25px;height:75.9px;background:#000;"></div>
<div style="left:507.3px;top:194.7px;width:174.9px;height:81.5px;background:#fff;border:0.8px solid #d0d0d0;box-sizing:border-box;"></div>
<svg style="left:507.3px;top:194.7px;font-family:'Liberation Sans','DejaVu Sans',sans-serif;" width="174.9" height="81.5" viewBox="0 0 174.9 81.5"><rect x="4.9" y="3.9" width="37" height="5.3" fill="#e4e4e4" stroke="#b0b0b0" stroke-width="0.4"/><text x="6.3" y="7.8" font-size="3.4" fill="#111" font-weight="bold" textLength="31" lengthAdjust="spacingAndGlyphs">Sum of Price (INR)</text><text x="80.7" y="19.9" font-size="6.6" fill="#3a3a3a" textLength="12.6" lengthAdjust="spacingAndGlyphs">Total</text><path d="M18.7 27.3H148.7" stroke="#dcdcdc" stroke-width="0.4"/><text x="3.1" y="28.3" font-size="2.9" fill="#222" font-weight="bold" textLength="9.6" lengthAdjust="spacingAndGlyphs">₹ 8.00M</text><path d="M18.7 31.4H148.7" stroke="#dcdcdc" stroke-width="0.4"/><text x="3.1" y="32.4" font-size="2.9" fill="#222" font-weight="bold" textLength="9.6" lengthAdjust="spacingAndGlyphs">₹ 7.80M</text><path d="M18.7 35.5H148.7" stroke="#dcdcdc" stroke-width="0.4"/><text x="3.1" y="36.5" font-size="2.9" fill="#222" font-weight="bold" textLength="9.6" lengthAdjust="spacingAndGlyphs">₹ 7.60M</text><path d="M18.7 39.6H148.7" stroke="#dcdcdc" stroke-width="0.4"/><text x="3.1" y="40.6" font-size="2.9" fill="#222" font-weight="bold" textLength="9.6" lengthAdjust="spacingAndGlyphs">₹ 7.40M</text><path d="M18.7 43.7H148.7" stroke="#dcdcdc" stroke-width="0.4"/><text x="3.1" y="44.7" font-size="2.9" fill="#222" font-weight="bold" textLength="9.6" lengthAdjust="spacingAndGlyphs">₹ 7.20M</text><path d="M18.7 47.8H148.7" stroke="#dcdcdc" stroke-width="0.4"/><text x="3.1" y="48.8" font-size="2.9" fill="#222" font-weight="bold" textLength="9.6" lengthAdjust="spacingAndGlyphs">₹ 7.00M</text><rect x="28" y="35.3" width="5.6" height="12.3" fill="#1a5480"/><text x="32.3" y="50.9" font-size="3.7" fill="#2a2a2a" text-anchor="end" transform="rotate(-45 32.3 50.9)">Sunday</text><rect x="46.5" y="38.9" width="5.3" height="8.7" fill="#1a5480"/><text x="50.65" y="50.9" font-size="3.7" fill="#2a2a2a" text-anchor="end" transform="rotate(-45 50.65 50.9)">Monday</text><rect x="64.7" y="40.2" width="5.2" height="7.4" fill="#1a5480"/><text x="68.8" y="50.9" font-size="3.7" fill="#2a2a2a" text-anchor="end" transform="rotate(-45 68.8 50.9)">Tuesday</text><rect x="82.8" y="37.3" width="5.6" height="10.3" fill="#1a5480"/><text x="87.1" y="50.9" font-size="3.7" fill="#2a2a2a" text-anchor="end" transform="rotate(-45 87.1 50.9)">Wednesday</text><rect x="101" y="34.6" width="5.6" height="13" fill="#1a5480"/><text x="105.3" y="50.9" font-size="3.7" fill="#2a2a2a" text-anchor="end" transform="rotate(-45 105.3 50.9)">Thursday</text><rect x="118.7" y="36.3" width="5.7" height="11.3" fill="#1a5480"/><text x="123.05" y="50.9" font-size="3.7" fill="#2a2a2a" text-anchor="end" transform="rotate(-45 123.05 50.9)">Friday</text><rect x="137.3" y="32.3" width="5.2" height="15.3" fill="#1a5480"/><text x="141.4" y="50.9" font-size="3.7" fill="#2a2a2a" text-anchor="end" transform="rotate(-45 141.4 50.9)">Saturday</text><rect x="156.7" y="45.9" width="2.8" height="2.8" fill="#1a5480"/><text x="160.3" y="48.5" font-size="3.4" fill="#333">Total</text><rect x="4.9" y="71.6" width="13.2" height="5.3" fill="#e4e4e4" stroke="#b0b0b0" stroke-width="0.4"/><text x="6.1" y="75.5" font-size="3.4" fill="#111" font-weight="bold">Day</text><path d="M13.7 73.7 h2.2 l-1.1 1.4 Z" fill="#333"/></svg>
<div style="left:283.5px;top:267px;width:70.8px;height:109.2px;background:#fff;border:1px solid #2c6e96;box-sizing:border-box;"></div>
<div class="t" style="left:286.5px;top:270px;font-size:5.6px;line-height:6px;color:#1c1c1c;font-weight:bold;transform:scaleX(0.729);">Months (</div>
<div style="left:287.1px;top:279.7px;width:55.6px;height:9.2px;background:#82c9ec;border:0.6px solid #5ea6d0;box-sizing:border-box;border-radius:1.5px;"></div>
<div class="t" style="left:289.9px;top:282px;font-size:5.3px;line-height:6px;color:#17303f;transform:scaleX(0.900);">Jan</div>
<div style="left:287.1px;top:291.3px;width:55.6px;height:9.2px;background:#82c9ec;border:0.6px solid #5ea6d0;box-sizing:border-box;border-radius:1.5px;"></div>
<div class="t" style="left:289.9px;top:293px;font-size:5.3px;line-height:6px;color:#17303f;transform:scaleX(0.900);">Feb</div>
<div style="left:287.1px;top:302.9px;width:55.6px;height:9.2px;background:#82c9ec;border:0.6px solid #5ea6d0;box-sizing:border-box;border-radius:1.5px;"></div>
<div class="t" style="left:289.9px;top:305px;font-size:5.3px;line-height:6px;color:#17303f;transform:scaleX(0.900);">Mar</div>
<div style="left:287.1px;top:314.5px;width:55.6px;height:9.2px;background:#82c9ec;border:0.6px solid #5ea6d0;box-sizing:border-box;border-radius:1.5px;"></div>
<div class="t" style="left:289.9px;top:316px;font-size:5.3px;line-height:6px;color:#17303f;transform:scaleX(0.900);">Apr</div>
<div style="left:287.1px;top:326.1px;width:55.6px;height:9.2px;background:#82c9ec;border:0.6px solid #5ea6d0;box-sizing:border-box;border-radius:1.5px;"></div>
<div class="t" style="left:289.9px;top:328px;font-size:5.3px;line-height:6px;color:#17303f;transform:scaleX(0.900);">May</div>
<div style="left:287.1px;top:337.7px;width:55.6px;height:9.2px;background:#82c9ec;border:0.6px solid #5ea6d0;box-sizing:border-box;border-radius:1.5px;"></div>
<div class="t" style="left:289.9px;top:340px;font-size:5.3px;line-height:6px;color:#17303f;transform:scaleX(0.900);">Jun</div>
<div style="left:287.1px;top:349.3px;width:55.6px;height:9.2px;background:#82c9ec;border:0.6px solid #5ea6d0;box-sizing:border-box;border-radius:1.5px;"></div>
<div class="t" style="left:289.9px;top:351px;font-size:5.3px;line-height:6px;color:#17303f;transform:scaleX(0.900);">Jul</div>
<div style="left:287.1px;top:360.9px;width:55.6px;height:9.2px;background:#82c9ec;border:0.6px solid #5ea6d0;box-sizing:border-box;border-radius:1.5px;"></div>
<div class="t" style="left:289.9px;top:363px;font-size:5.3px;line-height:6px;color:#17303f;transform:scaleX(0.900);">Aug</div>
<div style="left:343.8px;top:278.6px;width:7.8px;height:86.8px;background:#f1f1f1;"></div>
<svg style="left:344.6px;top:368.1px;" width="5.2" height="3.6" viewBox="0 0 5.2 3.6"><path d="M1 1 L2.6 2.6 L4.2 1" fill="none" stroke="#111" stroke-width="1.1"/></svg>
<div style="left:308.3px;top:223.3px;width:70.4px;height:108.9px;background:#fff;border:1px solid #2c6e96;box-sizing:border-box;"></div>
<div class="t" style="left:311.3px;top:226px;font-size:5.6px;line-height:6px;color:#1c1c1c;font-weight:bold;transform:scaleX(0.894);">Restaurant Name</div>
<div style="left:311px;top:234.7px;width:64.8px;height:0.8px;background:#a9cbe0;"></div>
<div style="left:311.2px;top:236.8px;width:55.7px;height:9.2px;background:#82c9ec;border:0.6px solid #5ea6d0;box-sizing:border-box;border-radius:1.5px;"></div>
<div class="t" style="left:314px;top:239px;font-size:5.3px;line-height:6px;color:#17303f;transform:scaleX(0.900);">175 C</div>
<div style="left:311.2px;top:248.4px;width:55.7px;height:9.2px;background:#82c9ec;border:0.6px solid #5ea6d0;box-sizing:border-box;border-radius:1.5px;"></div>
<div class="t" style="left:314px;top:250px;font-size:5.3px;line-height:6px;color:#17303f;transform:scaleX(0.900);">1944</div>
<div style="left:311.2px;top:260px;width:55.7px;height:9.2px;background:#82c9ec;border:0.6px solid #5ea6d0;box-sizing:border-box;border-radius:1.5px;"></div>
<div class="t" style="left:314px;top:262px;font-size:5.3px;line-height:6px;color:#17303f;transform:scaleX(0.900);">37 Ti</div>
<div style="left:311.2px;top:271.6px;width:55.7px;height:9.2px;background:#82c9ec;border:0.6px solid #5ea6d0;box-sizing:border-box;border-radius:1.5px;"></div>
<div class="t" style="left:314px;top:273px;font-size:5.3px;line-height:6px;color:#17303f;transform:scaleX(0.900);">4 Sea</div>
<div style="left:311.2px;top:283.2px;width:55.7px;height:9.2px;background:#82c9ec;border:0.6px solid #5ea6d0;box-sizing:border-box;border-radius:1.5px;"></div>
<div class="t" style="left:314px;top:285px;font-size:5.3px;line-height:6px;color:#17303f;transform:scaleX(0.900);">51 R</div>
<div style="left:311.2px;top:294.8px;width:55.7px;height:9.2px;background:#82c9ec;border:0.6px solid #5ea6d0;box-sizing:border-box;border-radius:1.5px;"></div>
<div class="t" style="left:314px;top:297px;font-size:5.3px;line-height:6px;color:#17303f;transform:scaleX(0.900);">6 Bal</div>
<div style="left:311.2px;top:306.4px;width:55.7px;height:9.2px;background:#82c9ec;border:0.6px solid #5ea6d0;box-sizing:border-box;border-radius:1.5px;"></div>
<div class="t" style="left:314px;top:308px;font-size:5.3px;line-height:6px;color:#17303f;transform:scaleX(0.900);">7th H</div>
<div style="left:311.2px;top:318px;width:55.7px;height:9.2px;background:#82c9ec;border:0.6px solid #5ea6d0;box-sizing:border-box;border-radius:1.5px;"></div>
<div class="t" style="left:314px;top:320px;font-size:5.3px;line-height:6px;color:#17303f;transform:scaleX(0.900);">7th H</div>
<svg style="left:356px;top:225.4px;" width="21" height="7.6" viewBox="0 0 21 7.6"><path d="M0.8 1.4 h1.2 M0.8 3.6 h1.2 M0.8 5.8 h1.2" stroke="#444" stroke-width="1"/><path d="M3 1.4 h3.6 M3 3.6 h3.6 M3 5.8 h3.6" stroke="#444" stroke-width="0.8"/><path d="M12 0.8 H18 L15.8 3.6 V6.6 H14.2 V3.6 Z" fill="#333"/><path d="M16.4 4.6 L18.6 6.8 M18.6 4.6 L16.4 6.8" stroke="#222" stroke-width="0.8"/></svg>
<svg style="left:369.2px;top:238.4px;" width="5.2" height="3.6" viewBox="0 0 5.2 3.6"><path d="M1 2.6 L2.6 1 L4.2 2.6" fill="none" stroke="#111" stroke-width="1.1"/></svg>
<div style="left:326.4px;top:242.5px;width:70.3px;height:108.6px;background:#fff;border:1px solid #2c6e96;box-sizing:border-box;"></div>
<div class="t" style="left:329.4px;top:246px;font-size:5.6px;line-height:6px;color:#1c1c1c;font-weight:bold;transform:scaleX(0.890);">Category</div>
<div style="left:329.4px;top:253.9px;width:64.6px;height:0.8px;background:#a9cbe0;"></div>
<div style="left:329.6px;top:255.6px;width:55.3px;height:9.2px;background:#82c9ec;border:0.6px solid #5ea6d0;box-sizing:border-box;border-radius:1.5px;"></div>
<div class="t" style="left:333.1px;top:257px;font-size:5.3px;line-height:6px;color:#17303f;transform:scaleX(0.907);">Desi Ghee Sweets</div>
<div style="left:329.6px;top:267.2px;width:55.3px;height:9.2px;background:#82c9ec;border:0.6px solid #5ea6d0;box-sizing:border-box;border-radius:1.5px;"></div>
<div class="t" style="left:332.4px;top:269px;font-size:5.3px;line-height:6px;color:#17303f;transform:scaleX(0.900);">( Chinese)</div>
<div style="left:329.6px;top:278.8px;width:55.3px;height:9.2px;background:#82c9ec;border:0.6px solid #5ea6d0;box-sizing:border-box;border-radius:1.5px;"></div>
<div class="t" style="left:332.4px;top:281px;font-size:5.3px;line-height:6px;color:#17303f;transform:scaleX(0.900);">(Pasta)</div>
<div style="left:329.6px;top:290.4px;width:55.3px;height:9.2px;background:#82c9ec;border:0.6px solid #5ea6d0;box-sizing:border-box;border-radius:1.5px;"></div>
<div class="t" style="left:332.4px;top:292px;font-size:5.3px;line-height:6px;color:#17303f;transform:scaleX(0.900);">(Roll)</div>
<div style="left:329.6px;top:302px;width:55.3px;height:9.2px;background:#82c9ec;border:0.6px solid #5ea6d0;box-sizing:border-box;border-radius:1.5px;"></div>
<div class="t" style="left:332.4px;top:304px;font-size:5.3px;line-height:6px;color:#17303f;transform:scaleX(0.900);">(Sides)</div>
<div style="left:329.6px;top:313.6px;width:55.3px;height:9.2px;background:#82c9ec;border:0.6px solid #5ea6d0;box-sizing:border-box;border-radius:1.5px;"></div>
<div class="t" style="left:332.4px;top:315px;font-size:5.3px;line-height:6px;color:#17303f;transform:scaleX(0.900);">*New* High-Protein...</div>
<div style="left:329.6px;top:325.2px;width:55.3px;height:9.2px;background:#82c9ec;border:0.6px solid #5ea6d0;box-sizing:border-box;border-radius:1.5px;"></div>
<div class="t" style="left:332.4px;top:327px;font-size:5.3px;line-height:6px;color:#17303f;transform:scaleX(0.900);">*New* High-Protein...</div>
<div style="left:329.6px;top:336.8px;width:55.3px;height:9.2px;background:#82c9ec;border:0.6px solid #5ea6d0;box-sizing:border-box;border-radius:1.5px;"></div>
<div class="t" style="left:332.4px;top:339px;font-size:5.3px;line-height:6px;color:#17303f;transform:scaleX(0.900);">[7500ram] Dum Bir...</div>
<svg style="left:375.6px;top:245px;" width="20.4" height="7.8" viewBox="0 0 20.4 7.8"><path d="M0.8 1.4 h1.2 M0.8 3.6 h1.2 M0.8 5.8 h1.2" stroke="#a0a0a0" stroke-width="1"/><path d="M3 1.4 h3.6 M3 3.6 h3.6 M3 5.8 h3.6" stroke="#a0a0a0" stroke-width="0.8"/><path d="M11.4 1 H17 L15 3.6 V6.8 H13.6 V3.6 Z" fill="none" stroke="#a0a0a0" stroke-width="0.7"/></svg>
<div style="left:387.2px;top:255px;width:5.8px;height:92.6px;background:#f4f4f4;"></div>
<svg style="left:387.4px;top:257.4px;" width="5.2" height="3.6" viewBox="0 0 5.2 3.6"><path d="M1 2.6 L2.6 1 L4.2 2.6" fill="none" stroke="#111" stroke-width="1.1"/></svg>
<div style="left:387.4px;top:262.4px;width:5.4px;height:4.2px;background:#c4c4c4;"></div>
<svg style="left:387.2px;top:342.7px;" width="5.2" height="3.6" viewBox="0 0 5.2 3.6"><path d="M1 1 L2.6 2.6 L4.2 1" fill="none" stroke="#111" stroke-width="1.1"/></svg>
<div style="left:0px;top:0px;width:1000px;height:38.6px;background:#0b0b0b;"></div>
<svg style="left:0.8px;top:6px;" width="8.4" height="9.4" viewBox="0 0 8.4 9.4"><rect x="0.4" y="0.2" width="7.6" height="9" rx="1" fill="#21a366"/><rect x="0.4" y="0.2" width="7.6" height="3.2" rx="1" fill="#86d64e"/><rect x="4.2" y="3.2" width="3.8" height="3" fill="#33c481"/><rect x="4.2" y="6.2" width="3.8" height="3" fill="#107c41"/><rect x="0" y="2.6" width="5.2" height="5.6" rx="0.8" fill="#0e6b38"/><path d="M1.3 3.8 L3.9 7 M3.9 3.8 L1.3 7" stroke="#fff" stroke-width="0.9"/></svg>
<div class="t" style="left:17.8px;top:6px;font-size:7.2px;line-height:9px;color:#fff;transform:scaleX(0.804);">AutoSave</div>
<div style="left:46.6px;top:4.7px;width:23.8px;height:10.8px;background:#333;border:1px solid #f0f0f0;box-sizing:border-box;border-radius:5.4px;"></div>
<div style="left:49px;top:6.9px;width:6.6px;height:6.6px;background:#fff;border-radius:50%;"></div>
<div class="t" style="left:58.6px;top:7px;font-size:6.6px;line-height:7px;color:#fff;font-weight:bold;transform:scaleX(0.923);">Off</div>
<svg style="left:77px;top:5.2px;" width="9.2" height="9.6" viewBox="0 0 9.2 9.6"><path d="M0.9 0.9 H6.6 L8.3 2.6 V8.7 H0.9 Z" fill="none" stroke="#fff" stroke-width="0.9"/><path d="M2.6 0.9 V3.4 H6 V0.9 M2.4 8.7 V5.6 H6.8 V8.7" fill="none" stroke="#fff" stroke-width="0.8"/></svg>
<svg style="left:92.5px;top:5px;" width="9" height="10" viewBox="0 0 9 10"><path d="M1.2 1 V4.6 H4.8" fill="none" stroke="#fff" stroke-width="1"/><path d="M1.4 4.4 C3 2 6.6 1.6 7.6 4.2 C8.4 6.4 6.6 8 4.2 9.4" fill="none" stroke="#fff" stroke-width="1"/></svg>
<svg style="left:103.1px;top:8.6px;" width="4.4" height="3.2" viewBox="0 0 4.4 3.2"><path d="M1 1 L2.2 2.2 L3.4 1" fill="none" stroke="#ccc" stroke-width="0.95"/></svg>
<svg style="left:112.5px;top:5px;" width="9.3" height="10" viewBox="0 0 9.3 10"><path d="M8 1 V4.6 H4.4" fill="none" stroke="#5a5a5a" stroke-width="1"/><path d="M7.8 4.4 C6.2 2 2.6 1.6 1.6 4.2 C0.8 6.4 2.6 8 5 9.4" fill="none" stroke="#5a5a5a" stroke-width="1"/></svg>
<svg style="left:123.6px;top:8.6px;" width="4.4" height="3.2" viewBox="0 0 4.4 3.2"><path d="M1 1 L2.2 2.2 L3.4 1" fill="none" stroke="#5a5a5a" stroke-width="0.95"/></svg>
<svg style="left:135px;top:8px;" width="4.4" height="5" viewBox="0 0 4.4 5"><path d="M0.6 0.6 H3.8" stroke="#ddd" stroke-width="0.7"/><path d="M0.6 2.2 L2.2 4 L3.8 2.2" fill="none" stroke="#ddd" stroke-width="0.7"/></svg>
<div class="t" style="left:152.8px;top:7px;font-size:7px;line-height:7px;color:#fff;transform:scaleX(0.845);">Dashboard Data Orders Excel</div>
<svg style="left:234.1px;top:8.45px;" width="7" height="4.5" viewBox="0 0 7 4.5"><path d="M1 1 L3.5 3.5 L6 1" fill="none" stroke="#f0f0f0" stroke-width="1.1"/></svg>
<div style="left:404px;top:2.5px;width:193.5px;height:15px;background:#1c1c1c;border:1px solid #505050;box-sizing:border-box;border-radius:2px;"></div>
<svg style="left:410.5px;top:6px;" width="8" height="8" viewBox="0 0 8 8"><circle cx="4.8" cy="3.2" r="2.4" fill="none" stroke="#ddd" stroke-width="0.8"/><path d="M3.1 4.9 L0.8 7.2" stroke="#ddd" stroke-width="0.8"/></svg>
<div class="t" style="left:426px;top:7px;font-size:7px;line-height:7px;color:#d8d8d8;transform:scaleX(0.924);">Search</div>
<div style="left:906.1px;top:4.2px;width:12.4px;height:12.4px;background:radial-gradient(circle,#5a3040 0,#7a4a48 28%,#b9a07a 40%,#f0edea 52%,#fbfaf9 100%);border-radius:50%;"></div>
<div style="left:934.8px;top:9.5px;width:5.6px;height:1.2px;background:#f4f4f4;"></div>
<svg style="left:959.5px;top:7.3px;" width="7" height="6.4" viewBox="0 0 7 6.4"><rect x="0.6" y="1.7" width="4.6" height="4.1" rx="0.9" fill="none" stroke="#f4f4f4" stroke-width="1.1"/><path d="M1.9 1.6 V0.7 H6.2 V4.5 H5.3" fill="none" stroke="#f4f4f4" stroke-width="1"/></svg>
<svg style="left:984.5px;top:7.3px;" width="7" height="6.4" viewBox="0 0 7 6.4"><path d="M0.9 0.7 L6.1 5.7 M6.1 0.7 L0.9 5.7" stroke="#f4f4f4" stroke-width="1.25"/></svg>
<div class="t" style="left:4.5px;top:27px;font-size:7.6px;line-height:9px;color:#fff;transform:scaleX(0.759);">File</div>
<div class="t" style="left:27.6px;top:27px;font-size:7.6px;line-height:9px;color:#fff;transform:scaleX(0.962);">Home</div>
<div class="t" style="left:57.6px;top:27px;font-size:7.6px;line-height:9px;color:#fff;transform:scaleX(0.884);">Insert</div>
<div class="t" style="left:85.7px;top:27px;font-size:7.6px;line-height:9px;color:#fff;transform:scaleX(0.891);">Draw</div>
<div class="t" style="left:112.7px;top:27px;font-size:7.6px;line-height:9px;color:#fff;transform:scaleX(0.869);">Page Layout</div>
<div class="t" style="left:161.6px;top:27px;font-size:7.6px;line-height:9px;color:#fff;transform:scaleX(0.868);">Formulas</div>
<div class="t" style="left:200.4px;top:27px;font-size:7.6px;line-height:9px;color:#fff;transform:scaleX(0.860);">Data</div>
<div class="t" style="left:225.5px;top:27px;font-size:7.6px;line-height:9px;color:#fff;transform:scaleX(0.851);">Review</div>
<div class="t" style="left:257px;top:27px;font-size:7.6px;line-height:9px;color:#fff;transform:scaleX(0.888);">View</div>
<div class="t" style="left:283px;top:27px;font-size:7.6px;line-height:9px;color:#fff;transform:scaleX(0.891);">Automate</div>
<div class="t" style="left:323.5px;top:27px;font-size:7.6px;line-height:9px;color:#fff;transform:scaleX(0.896);">Help</div>
<div style="left:27.7px;top:35.8px;width:19.8px;height:1.3px;background:#62c584;border-radius:0.6px;"></div>
<div style="left:905.6px;top:24.6px;width:47.2px;height:12.6px;background:#242424;border:1px solid #686868;box-sizing:border-box;border-radius:2.4px;"></div>
<svg style="left:908px;top:27.6px;" width="6.5" height="6.8" viewBox="0 0 6.5 6.8"><path d="M0.6 0.6 H5.8 V4.2 H2.8 L1.4 5.8 V4.2 H0.6 Z" fill="none" stroke="#eee" stroke-width="0.8"/></svg>
<div class="t" style="left:916.8px;top:27px;font-size:7.2px;line-height:9px;color:#fff;transform:scaleX(0.925);">Comments</div>
<div style="left:956.9px;top:25px;width:37.1px;height:11.8px;background:#3eb572;border-radius:2px;"></div>
<svg style="left:958.8px;top:27.4px;" width="7.2" height="7" viewBox="0 0 7.2 7"><path d="M0.8 3.6 V6.2 H5.6 V3.6" fill="none" stroke="#0b2a18" stroke-width="0.8"/><path d="M3.2 4.6 V1 M1.8 2.4 L3.2 0.9 L4.6 2.4" fill="none" stroke="#0b2a18" stroke-width="0.8"/></svg>
<div class="t" style="left:968.2px;top:27px;font-size:7.2px;line-height:9px;color:#0b2a18;transform:scaleX(0.874);">Share</div>
<svg style="left:988px;top:29.55px;" width="4.6" height="3.3" viewBox="0 0 4.6 3.3"><path d="M1 1 L2.3 2.3 L3.6 1" fill="none" stroke="#0b2a18" stroke-width="0.95"/></svg>
<div style="left:0px;top:38.6px;width:995.5px;height:52.4px;background:#262626;border-radius:0 4px 4px 0;"></div>
<div style="left:88.3px;top:41.4px;width:1px;height:46.6px;background:#4d4d4d;"></div>
<div style="left:212.1px;top:41.4px;width:1px;height:46.6px;background:#4d4d4d;"></div>
<div style="left:387.9px;top:41.4px;width:1px;height:46.6px;background:#4d4d4d;"></div>
<div style="left:473px;top:41.4px;width:1px;height:46.6px;background:#4d4d4d;"></div>
<div style="left:577px;top:41.4px;width:1px;height:46.6px;background:#4d4d4d;"></div>
<div style="left:654.1px;top:41.4px;width:1px;height:46.6px;background:#4d4d4d;"></div>
<div style="left:768.2px;top:41.4px;width:1px;height:46.6px;background:#4d4d4d;"></div>
<div style="left:807px;top:41.4px;width:1px;height:46.6px;background:#4d4d4d;"></div>
<div style="left:840.1px;top:41.4px;width:1px;height:46.6px;background:#4d4d4d;"></div>
<div style="left:871px;top:41.4px;width:1px;height:46.6px;background:#4d4d4d;"></div>
<div style="left:902.2px;top:41.4px;width:1px;height:46.6px;background:#4d4d4d;"></div>
<div class="t" style="left:26.7px;top:82px;font-size:6.4px;line-height:7px;color:#f4f4f4;transform:scaleX(0.960);">Clipboard</div>
<div class="t" style="left:140px;top:82px;font-size:6.4px;line-height:7px;color:#f4f4f4;transform:scaleX(0.984);">Font</div>
<div class="t" style="left:282.2px;top:82px;font-size:6.4px;line-height:7px;color:#f4f4f4;transform:scaleX(0.980);">Alignment</div>
<div class="t" style="left:416.7px;top:82px;font-size:6.4px;line-height:7px;color:#f4f4f4;transform:scaleX(0.914);">Number</div>
<div class="t" style="left:518px;top:82px;font-size:6.4px;line-height:7px;color:#f4f4f4;transform:scaleX(0.878);">Styles</div>
<div class="t" style="left:609.8px;top:82px;font-size:6.4px;line-height:7px;color:#f4f4f4;transform:scaleX(0.865);">Cells</div>
<div class="t" style="left:702px;top:82px;font-size:6.4px;line-height:7px;color:#f4f4f4;transform:scaleX(0.981);">Editing</div>
<div class="t" style="left:774.3px;top:82px;font-size:6.4px;line-height:7px;color:#f4f4f4;transform:scaleX(0.934);">Sensitivity</div>
<div class="t" style="left:813px;top:82px;font-size:6.4px;line-height:7px;color:#f4f4f4;transform:scaleX(0.968);">Add-ins</div>
<div class="t" style="left:877.8px;top:82px;font-size:6.4px;line-height:7px;color:#f4f4f4;transform:scaleX(0.907);">Claude</div>
<svg style="left:82px;top:84.6px;" width="4.6" height="4" viewBox="0 0 4.6 4"><path d="M0.5 3.6 V0.5 H3.6" fill="none" stroke="#f0f0f0" stroke-width="0.9"/><path d="M1.9 1.9 L3.7 3.6 M3.9 2 V3.8 H2.1" fill="none" stroke="#f0f0f0" stroke-width="0.8"/></svg>
<svg style="left:206px;top:84.6px;" width="4.6" height="4" viewBox="0 0 4.6 4"><path d="M0.5 3.6 V0.5 H3.6" fill="none" stroke="#f0f0f0" stroke-width="0.9"/><path d="M1.9 1.9 L3.7 3.6 M3.9 2 V3.8 H2.1" fill="none" stroke="#f0f0f0" stroke-width="0.8"/></svg>
<svg style="left:382.3px;top:84.6px;" width="4.6" height="4" viewBox="0 0 4.6 4"><path d="M0.5 3.6 V0.5 H3.6" fill="none" stroke="#f0f0f0" stroke-width="0.9"/><path d="M1.9 1.9 L3.7 3.6 M3.9 2 V3.8 H2.1" fill="none" stroke="#f0f0f0" stroke-width="0.8"/></svg>
<svg style="left:467px;top:84.6px;" width="4.6" height="4" viewBox="0 0 4.6 4"><path d="M0.5 3.6 V0.5 H3.6" fill="none" stroke="#f0f0f0" stroke-width="0.9"/><path d="M1.9 1.9 L3.7 3.6 M3.9 2 V3.8 H2.1" fill="none" stroke="#f0f0f0" stroke-width="0.8"/></svg>
<svg style="left:984.3px;top:82.1px;" width="6.4" height="4.2" viewBox="0 0 6.4 4.2"><path d="M1 1 L3.2 3.2 L5.4 1" fill="none" stroke="#e8e8e8" stroke-width="1.0"/></svg>
<svg style="left:7.5px;top:42.6px;" width="16.5" height="17.2" viewBox="0 0 16.5 17.2"><rect x="0.8" y="2.6" width="9.4" height="11.6" rx="0.8" fill="none" stroke="#f2b600" stroke-width="1.3"/><rect x="3.2" y="0.8" width="4.6" height="3" rx="0.8" fill="#262626" stroke="#ddd" stroke-width="0.9"/><rect x="7.4" y="6.6" width="7.8" height="9.6" rx="0.6" fill="#3a3a3a" stroke="#eee" stroke-width="1"/></svg>
<div class="t" style="left:6.8px;top:61px;font-size:7.2px;line-height:9px;color:#fff;transform:scaleX(0.798);">Paste</div>
<svg style="left:12.2px;top:73.38px;" width="3" height="1.65" viewBox="0 0 3 1.65"><path d="M0 0 L3 0 L1.5 1.65 Z" fill="#ddd"/></svg>
<svg style="left:29.6px;top:43.8px;" width="6" height="8.6" viewBox="0 0 6 8.6"><path d="M1.6 0.4 L4 5.4 M4.4 0.4 L2 5.4" stroke="#eee" stroke-width="0.8"/><circle cx="1.6" cy="6.8" r="1.2" fill="#3a96dd"/><circle cx="4.4" cy="6.8" r="1.2" fill="#3a96dd"/></svg>
<div class="t" style="left:38.8px;top:43px;font-size:7.2px;line-height:9px;color:#fff;transform:scaleX(0.893);">Cut</div>
<svg style="left:27.8px;top:56.6px;" width="9" height="9.4" viewBox="0 0 9 9.4"><path d="M2.6 1.4 H0.7 V7.4 H2.6" fill="none" stroke="#eee" stroke-width="0.9"/><path d="M2.8 0.7 H6 L8.2 2.9 V8.6 H2.8 Z" fill="#262626" stroke="#eee" stroke-width="0.9"/><path d="M5.2 8.4 V5.8 H7.2" fill="none" stroke="#eee" stroke-width="0.8"/></svg>
<div class="t" style="left:38.8px;top:57px;font-size:7.2px;line-height:9px;color:#fff;transform:scaleX(0.863);">Copy</div>
<svg style="left:61.9px;top:59.05px;" width="5" height="3.5" viewBox="0 0 5 3.5"><path d="M1 1 L2.5 2.5 L4 1" fill="none" stroke="#f2f2f2" stroke-width="0.95"/></svg>
<svg style="left:28.4px;top:69.6px;" width="9" height="9.6" viewBox="0 0 9 9.6"><path d="M0.8 5.6 L4.6 2.6 L6.4 4.8 L2.6 8 Z" fill="#f2c200"/><path d="M5 2.8 L7.6 0.6 L8.6 1.8 L6.2 4.2 Z" fill="#ddd"/><path d="M0.8 5.6 L2.6 8" stroke="#fff" stroke-width="0.6"/></svg>
<div class="t" style="left:38.8px;top:70px;font-size:7.2px;line-height:9px;color:#fff;transform:scaleX(0.857);">Format Painter</div>
<div style="left:93.5px;top:45.4px;width:63.4px;height:12.1px;background:#1f1f1f;border:1px solid #5a5a5a;box-sizing:border-box;border-radius:2px;"></div>
<div class="t" style="left:94.8px;top:48px;font-size:7px;line-height:7px;color:#fff;transform:scaleX(0.898);">Aptos Narrow</div>
<svg style="left:152.4px;top:50.97px;" width="3" height="1.65" viewBox="0 0 3 1.65"><path d="M0 0 L3 0 L1.5 1.65 Z" fill="#f2f2f2"/></svg>
<div style="left:159.3px;top:45.4px;width:21.3px;height:12.1px;background:#1f1f1f;border:1px solid #5a5a5a;box-sizing:border-box;border-radius:2px;"></div>
<div class="t" style="left:160.8px;top:48px;font-size:7px;line-height:7px;color:#fff;transform:scaleX(0.745);">12</div>
<svg style="left:176px;top:50.97px;" width="3" height="1.65" viewBox="0 0 3 1.65"><path d="M0 0 L3 0 L1.5 1.65 Z" fill="#f2f2f2"/></svg>
<div class="t" style="left:185px;top:47px;font-size:8.6px;line-height:10px;color:#fff;transform:scaleX(0.976);">A</div>
<svg style="left:190.2px;top:46.6px;" width="2.8" height="2.8" viewBox="0 0 2.8 2.8"><path d="M0.3 1.9 L1.4 0.5 L2.5 1.9" fill="none" stroke="#3a96dd" stroke-width="0.7"/></svg>
<div class="t" style="left:199.2px;top:48px;font-size:7.4px;line-height:9px;color:#fff;transform:scaleX(0.972);">A</div>
<svg style="left:203.2px;top:47px;" width="2.8" height="2.8" viewBox="0 0 2.8 2.8"><path d="M0.3 0.6 L1.4 2 L2.5 0.6" fill="none" stroke="#3a96dd" stroke-width="0.7"/></svg>
<div class="t" style="left:97px;top:64px;font-size:7.2px;line-height:9px;color:#fff;font-weight:bold;transform:scaleX(0.846);">B</div>
<div class="t" style="left:111.4px;top:65px;font-size:7.2px;line-height:8px;color:#fff;font-weight:bold;font-style:italic;font-family:'Liberation Serif',serif;transform:scaleX(0.857);">I</div>
<div class="t" style="left:123.6px;top:63px;font-size:7.2px;line-height:9px;color:#fff;transform:scaleX(0.923);text-decoration:underline;">U</div>
<svg style="left:134.8px;top:67.72px;" width="3.2" height="1.76" viewBox="0 0 3.2 1.76"><path d="M0 0 L3.2 0 L1.6 1.76 Z" fill="#e4e4e4"/></svg>
<div style="left:141.5px;top:62px;width:1px;height:12.5px;background:#4d4d4d;"></div>
<svg style="left:145px;top:63.6px;" width="8.2" height="8.8" viewBox="0 0 8.2 8.8"><rect x="0.5" y="0.5" width="7.2" height="7.6" fill="none" stroke="#ddd" stroke-width="1"/><path d="M4.1 0.5 V5.4 M0.5 5.4 H7.7" stroke="#ddd" stroke-width="0.8"/></svg>
<svg style="left:157.7px;top:67.72px;" width="3.2" height="1.76" viewBox="0 0 3.2 1.76"><path d="M0 0 L3.2 0 L1.6 1.76 Z" fill="#e4e4e4"/></svg>
<div style="left:165.1px;top:62px;width:1px;height:12.5px;background:#4d4d4d;"></div>
<svg style="left:168.4px;top:62.6px;" width="9" height="10.8" viewBox="0 0 9 10.8"><path d="M3 4.8 L5.2 1.2 L7.4 4.8 L5.2 6.6 Z" fill="none" stroke="#eee" stroke-width="0.8"/><path d="M7.8 5 Q8.8 6.6 7.8 7 Q7 6.6 7.8 5" fill="#3a96dd"/><rect x="0.4" y="8" width="8.4" height="2.4" fill="#ffe600"/></svg>
<svg style="left:180.7px;top:67.72px;" width="3.2" height="1.76" viewBox="0 0 3.2 1.76"><path d="M0 0 L3.2 0 L1.6 1.76 Z" fill="#e4e4e4"/></svg>
<div class="t" style="left:191.6px;top:62px;font-size:8px;line-height:9px;color:#fff;transform:scaleX(1.124);">A</div>
<div style="left:190.6px;top:71.2px;width:8.2px;height:2.2px;background:#e81123;"></div>
<svg style="left:202.5px;top:67.72px;" width="3.2" height="1.76" viewBox="0 0 3.2 1.76"><path d="M0 0 L3.2 0 L1.6 1.76 Z" fill="#e4e4e4"/></svg>
<div style="left:218.8px;top:47px;width:8.1px;height:0.9px;background:#ddd;"></div>
<div style="left:218.8px;top:48.9px;width:5.5px;height:0.9px;background:#ddd;"></div>
<div style="left:218.8px;top:50.8px;width:8.1px;height:0.9px;background:#ddd;"></div>
<div style="left:232.8px;top:49px;width:7.8px;height:0.9px;background:#ddd;"></div>
<div style="left:232.8px;top:51px;width:5.2px;height:0.9px;background:#ddd;"></div>
<div style="left:232.8px;top:53px;width:7.8px;height:0.9px;background:#ddd;"></div>
<div style="left:244.5px;top:45.4px;width:11.9px;height:12.1px;background:#1f1f1f;border:1px solid #8a8a8a;box-sizing:border-box;border-radius:2px;"></div>
<div style="left:247px;top:50.2px;width:4.6px;height:0.9px;background:#ddd;"></div>
<div style="left:247px;top:52.2px;width:7px;height:0.9px;background:#ddd;"></div>
<div style="left:247px;top:54.2px;width:7px;height:0.9px;background:#ddd;"></div>
<div style="left:257.9px;top:46px;width:1px;height:11px;background:#4d4d4d;"></div>
<svg style="left:261px;top:46px;" width="10" height="10.6" viewBox="0 0 10 10.6"><text x="0" y="5" font-size="5" fill="#ddd" font-family="Liberation Sans, sans-serif" transform="rotate(-30 2 5)">ab</text><path d="M2.6 9.6 L8.6 3.4 M6.2 3.2 H8.8 V5.8" fill="none" stroke="#3a96dd" stroke-width="0.9"/></svg>
<svg style="left:272.8px;top:51.12px;" width="3.2" height="1.76" viewBox="0 0 3.2 1.76"><path d="M0 0 L3.2 0 L1.6 1.76 Z" fill="#e4e4e4"/></svg>
<div style="left:281px;top:45.4px;width:1px;height:12.1px;background:#4d4d4d;"></div>
<svg style="left:285.4px;top:47.6px;" width="8.2" height="8" viewBox="0 0 8.2 8"><path d="M0.6 2.2 L2.4 4 L0.6 5.8" fill="none" stroke="#3a96dd" stroke-width="0.8"/><text x="3" y="6.4" font-size="6.6" fill="#ddd" font-family="Liberation Sans, sans-serif">¶</text></svg>
<svg style="left:297.5px;top:51.12px;" width="3.2" height="1.76" viewBox="0 0 3.2 1.76"><path d="M0 0 L3.2 0 L1.6 1.76 Z" fill="#e4e4e4"/></svg>
<div style="left:306px;top:44.5px;width:1px;height:32.5px;background:#4d4d4d;"></div>
<div style="left:218.8px;top:64.2px;width:8px;height:0.8px;background:#a0a0a0;"></div>
<div style="left:218.8px;top:66.4px;width:5.4px;height:0.8px;background:#a0a0a0;"></div>
<div style="left:218.8px;top:68.6px;width:8px;height:0.8px;background:#a0a0a0;"></div>
<div style="left:218.8px;top:70.8px;width:5.4px;height:0.8px;background:#a0a0a0;"></div>
<div style="left:232.8px;top:64.2px;width:8px;height:0.8px;background:#a0a0a0;"></div>
<div style="left:234.1px;top:66.4px;width:5.4px;height:0.8px;background:#a0a0a0;"></div>
<div style="left:232.8px;top:68.6px;width:8px;height:0.8px;background:#a0a0a0;"></div>
<div style="left:234.1px;top:70.8px;width:5.4px;height:0.8px;background:#a0a0a0;"></div>
<div style="left:246.4px;top:64.2px;width:8px;height:0.8px;background:#a0a0a0;"></div>
<div style="left:249px;top:66.4px;width:5.4px;height:0.8px;background:#a0a0a0;"></div>
<div style="left:246.4px;top:68.6px;width:8px;height:0.8px;background:#a0a0a0;"></div>
<div style="left:249px;top:70.8px;width:5.4px;height:0.8px;background:#a0a0a0;"></div>
<div style="left:257.4px;top:62px;width:1px;height:12.5px;background:#4d4d4d;"></div>
<div style="left:261.8px;top:64.2px;width:7.6px;height:0.8px;background:#a8a8a8;"></div>
<div style="left:261.8px;top:70.8px;width:7.6px;height:0.8px;background:#a8a8a8;"></div>
<div style="left:265.4px;top:66.4px;width:4px;height:0.8px;background:#a8a8a8;"></div>
<div style="left:265.4px;top:68.6px;width:4px;height:0.8px;background:#a8a8a8;"></div>
<svg style="left:261.8px;top:65.8px;" width="3.4" height="4.2" viewBox="0 0 3.4 4.2"><path d="M0.2 2.1 H3 M1.6 0.8 L0.3 2.1 L1.6 3.4" fill="none" stroke="#3a96dd" stroke-width="0.8"/></svg>
<div style="left:275px;top:64.2px;width:7.6px;height:0.8px;background:#a8a8a8;"></div>
<div style="left:275px;top:70.8px;width:7.6px;height:0.8px;background:#a8a8a8;"></div>
<div style="left:278.6px;top:66.4px;width:4px;height:0.8px;background:#a8a8a8;"></div>
<div style="left:278.6px;top:68.6px;width:4px;height:0.8px;background:#a8a8a8;"></div>
<svg style="left:275px;top:65.8px;" width="3.4" height="4.2" viewBox="0 0 3.4 4.2"><path d="M0.2 2.1 H3 M1.7 0.8 L3 2.1 L1.7 3.4" fill="none" stroke="#3a96dd" stroke-width="0.8"/></svg>
<svg style="left:312.5px;top:46.6px;" width="8.3" height="10" viewBox="0 0 8.3 10"><text x="1.4" y="4.6" font-size="5" fill="#ddd" font-family="Liberation Sans, sans-serif">ab</text><path d="M0.6 0.6 V9.4" stroke="#ccc" stroke-width="0.6"/><path d="M1.6 7.6 H6.4 Q7.8 7.6 7.8 6.2 Q7.8 5 6.4 5 M3.4 6.2 L1.8 7.6 L3.4 9" fill="none" stroke="#3a96dd" stroke-width="0.8"/></svg>
<div class="t" style="left:322.9px;top:47px;font-size:7.2px;line-height:9px;color:#fff;transform:scaleX(0.846);">Wrap Text</div>
<svg style="left:312px;top:63.6px;" width="8.4" height="8.6" viewBox="0 0 8.4 8.6"><rect x="0.5" y="0.5" width="7.4" height="7.6" fill="none" stroke="#eee" stroke-width="0.9"/><rect x="1.6" y="2.6" width="5.2" height="3.4" fill="#3a96dd"/><path d="M3 4.3 H5.4" stroke="#fff" stroke-width="0.6"/></svg>
<div class="t" style="left:322.9px;top:64px;font-size:7.2px;line-height:9px;color:#fff;transform:scaleX(0.880);">Merge &amp; Center</div>
<svg style="left:376.8px;top:67.72px;" width="3.2" height="1.76" viewBox="0 0 3.2 1.76"><path d="M0 0 L3.2 0 L1.6 1.76 Z" fill="#e4e4e4"/></svg>
<div style="left:393.3px;top:45.4px;width:76.1px;height:12.1px;background:#1f1f1f;border:1px solid #5a5a5a;box-sizing:border-box;border-radius:2px;"></div>
<div class="t" style="left:395.3px;top:48px;font-size:7px;line-height:7px;color:#fff;transform:scaleX(0.807);">General</div>
<svg style="left:464.9px;top:50.97px;" width="3" height="1.65" viewBox="0 0 3 1.65"><path d="M0 0 L3 0 L1.5 1.65 Z" fill="#f2f2f2"/></svg>
<div class="t" style="left:396.6px;top:64px;font-size:8.4px;line-height:10px;color:#fff;transform:scaleX(0.963);">$</div>
<svg style="left:408px;top:67.72px;" width="3.2" height="1.76" viewBox="0 0 3.2 1.76"><path d="M0 0 L3.2 0 L1.6 1.76 Z" fill="#e4e4e4"/></svg>
<div class="t" style="left:417.4px;top:64px;font-size:8.4px;line-height:10px;color:#fff;transform:scaleX(1.044);">%</div>
<svg style="left:432.4px;top:65px;" width="5" height="7.6" viewBox="0 0 5 7.6"><circle cx="2.6" cy="2.4" r="2.1" fill="#f2f2f2"/><path d="M4.6 2.2 Q5 5.6 1.2 7.2 L0.9 6.4 Q3 5.2 2.6 4 Z" fill="#f2f2f2"/></svg>
<div style="left:442.2px;top:62px;width:1px;height:12.5px;background:#4d4d4d;"></div>
<svg style="left:445.6px;top:63px;" width="9.4" height="10" viewBox="0 0 9.4 10"><path d="M0.4 2 H3.2 M1.6 0.8 L0.4 2 L1.6 3.2" fill="none" stroke="#3a96dd" stroke-width="0.8"/><text x="3.2" y="4.8" font-size="4.6" fill="#ddd" font-family="Liberation Sans, sans-serif">0</text><text x="0.4" y="9.4" font-size="5" fill="#ddd" font-family="Liberation Sans, sans-serif">.00</text></svg>
<svg style="left:458.6px;top:63px;" width="10" height="10" viewBox="0 0 10 10"><text x="4" y="4.6" font-size="4.6" fill="#ddd" font-family="Liberation Sans, sans-serif">00</text><path d="M0.4 7.4 H3.4 M2.2 6.2 L3.4 7.4 L2.2 8.6" fill="none" stroke="#3a96dd" stroke-width="0.8"/><text x="4" y="9.4" font-size="5" fill="#ddd" font-family="Liberation Sans, sans-serif">.0</text></svg>
<svg style="left:490px;top:44.8px;" width="15.3" height="12" viewBox="0 0 15.3 12"><rect x="4.2" y="0.8" width="7.2" height="3.6" fill="#e81123"/><rect x="4.2" y="4.4" width="3.6" height="3.4" fill="#2b7cd3"/><rect x="7.8" y="4.4" width="3.6" height="3.4" fill="#e81123" opacity="0"/><rect x="4.2" y="7.8" width="7.2" height="3.6" fill="#e81123"/><rect x="7.8" y="0.8" width="3.6" height="3.6" fill="#e81123"/><rect x="0.5" y="0.5" width="14.3" height="11" fill="none" stroke="#ddd" stroke-width="0.8"/><path d="M4.08 0.5 V11.5" stroke="#ddd" stroke-width="0.6"/><path d="M7.65 0.5 V11.5" stroke="#ddd" stroke-width="0.6"/><path d="M11.23 0.5 V11.5" stroke="#ddd" stroke-width="0.6"/><path d="M0.5 4.17 H14.8" stroke="#ddd" stroke-width="0.6"/><path d="M0.5 7.83 H14.8" stroke="#ddd" stroke-width="0.6"/></svg>
<div class="t" style="left:481.3px;top:61px;font-size:7.2px;line-height:9px;color:#fff;transform:scaleX(0.913);">Conditional</div>
<div class="t" style="left:479.6px;top:69px;font-size:7.2px;line-height:9px;color:#fff;transform:scaleX(0.895);">Formatting</div>
<svg style="left:510.9px;top:72.25px;" width="5" height="3.5" viewBox="0 0 5 3.5"><path d="M1 1 L2.5 2.5 L4 1" fill="none" stroke="#f2f2f2" stroke-width="0.95"/></svg>
<svg style="left:525.9px;top:44.8px;" width="16.6" height="13.8" viewBox="0 0 16.6 13.8"><rect x="5.4" y="4.2" width="9.4" height="7.4" fill="#2b7cd3"/><rect x="0.5" y="0.5" width="14.2" height="11" fill="none" stroke="#ddd" stroke-width="0.8"/><path d="M5.23 0.5 V11.5" stroke="#ddd" stroke-width="0.6"/><path d="M9.97 0.5 V11.5" stroke="#ddd" stroke-width="0.6"/><path d="M0.5 4.17 H14.7" stroke="#ddd" stroke-width="0.6"/><path d="M0.5 7.83 H14.7" stroke="#ddd" stroke-width="0.6"/><path d="M14.6 3.4 L10.4 9.6" stroke="#ddd" stroke-width="1.4"/><path d="M10.6 9.2 Q8.6 9.8 8 12.6 Q10.8 12.6 11.6 10.2 Z" fill="#3a96dd"/></svg>
<div class="t" style="left:519.6px;top:61px;font-size:7.2px;line-height:9px;color:#fff;transform:scaleX(0.852);">Format as</div>
<div class="t" style="left:524.2px;top:69px;font-size:7.2px;line-height:9px;color:#fff;transform:scaleX(0.825);">Table</div>
<svg style="left:538.9px;top:72.25px;" width="5" height="3.5" viewBox="0 0 5 3.5"><path d="M1 1 L2.5 2.5 L4 1" fill="none" stroke="#f2f2f2" stroke-width="0.95"/></svg>
<svg style="left:553.8px;top:44.8px;" width="17.2" height="13.8" viewBox="0 0 17.2 13.8"><rect x="0.5" y="0.5" width="14.6" height="11" fill="none" stroke="#ddd" stroke-width="0.8"/><rect x="3.4" y="3" width="9" height="5.8" fill="#2b7cd3"/><path d="M15.6 3.4 L11.4 9.6" stroke="#ddd" stroke-width="1.4"/><path d="M11.6 9.2 Q9.6 9.8 9 12.6 Q11.8 12.6 12.6 10.2 Z" fill="#3a96dd"/></svg>
<div class="t" style="left:556.4px;top:61px;font-size:7.2px;line-height:9px;color:#fff;transform:scaleX(0.855);">Cell</div>
<div class="t" style="left:550.2px;top:69px;font-size:7.2px;line-height:9px;color:#fff;transform:scaleX(0.877);">Styles</div>
<svg style="left:567.7px;top:72.25px;" width="5" height="3.5" viewBox="0 0 5 3.5"><path d="M1 1 L2.5 2.5 L4 1" fill="none" stroke="#f2f2f2" stroke-width="0.95"/></svg>
<svg style="left:585.4px;top:44.8px;" width="16.3" height="12" viewBox="0 0 16.3 12"><rect x="0.5" y="0.5" width="15.3" height="11" fill="none" stroke="#ddd" stroke-width="0.8"/><path d="M5.6 0.5 V11.5" stroke="#ddd" stroke-width="0.6"/><path d="M10.7 0.5 V11.5" stroke="#ddd" stroke-width="0.6"/><path d="M0.5 4.17 H15.8" stroke="#ddd" stroke-width="0.6"/><path d="M0.5 7.83 H15.8" stroke="#ddd" stroke-width="0.6"/><rect x="3.4" y="4.2" width="12.6" height="3.6" fill="#2b7cd3"/><path d="M0.4 6 L3.8 3 V9 Z" fill="#3a96dd"/></svg>
<div class="t" style="left:585.7px;top:61px;font-size:7.2px;line-height:9px;color:#fff;transform:scaleX(0.833);">Insert</div>
<svg style="left:591.5px;top:73.38px;" width="3" height="1.65" viewBox="0 0 3 1.65"><path d="M0 0 L3 0 L1.5 1.65 Z" fill="#ddd"/></svg>
<svg style="left:608.5px;top:44.8px;" width="16.1" height="12" viewBox="0 0 16.1 12"><rect x="0.5" y="0.5" width="15.3" height="11" fill="none" stroke="#ddd" stroke-width="0.8"/><path d="M5.6 0.5 V11.5" stroke="#ddd" stroke-width="0.6"/><path d="M10.7 0.5 V11.5" stroke="#ddd" stroke-width="0.6"/><path d="M0.5 4.17 H15.8" stroke="#ddd" stroke-width="0.6"/><path d="M0.5 7.83 H15.8" stroke="#ddd" stroke-width="0.6"/><rect x="2.6" y="4.2" width="7.4" height="3.6" fill="#2b7cd3"/><path d="M10 3 L15 9 M15 3 L10 9" stroke="#e81123" stroke-width="0.9"/></svg>
<div class="t" style="left:607.8px;top:61px;font-size:7.2px;line-height:9px;color:#fff;transform:scaleX(0.812);">Delete</div>
<svg style="left:614.5px;top:73.38px;" width="3" height="1.65" viewBox="0 0 3 1.65"><path d="M0 0 L3 0 L1.5 1.65 Z" fill="#ddd"/></svg>
<svg style="left:631.8px;top:42.4px;" width="15.4" height="14.4" viewBox="0 0 15.4 14.4"><path d="M3.4 0.6 H12" stroke="#3a96dd" stroke-width="0.8"/><g transform="translate(0,2.4)"><rect x="0.5" y="0.5" width="14.4" height="11" fill="none" stroke="#ddd" stroke-width="0.8"/><path d="M5.3 0.5 V11.5" stroke="#ddd" stroke-width="0.6"/><path d="M10.1 0.5 V11.5" stroke="#ddd" stroke-width="0.6"/><path d="M0.5 4.17 H14.9" stroke="#ddd" stroke-width="0.6"/><path d="M0.5 7.83 H14.9" stroke="#ddd" stroke-width="0.6"/><rect x="4.4" y="4.2" width="6.6" height="3.6" fill="#2b7cd3"/></g></svg>
<div class="t" style="left:629.9px;top:61px;font-size:7.2px;line-height:9px;color:#fff;transform:scaleX(0.842);">Format</div>
<svg style="left:636.5px;top:72.25px;" width="5" height="3.5" viewBox="0 0 5 3.5"><path d="M1 1 L2.5 2.5 L4 1" fill="none" stroke="#f2f2f2" stroke-width="0.95"/></svg>
<div class="t" style="left:662.4px;top:43px;font-size:9px;line-height:10px;color:#fff;transform:scaleX(1.168);">Σ</div>
<div class="t" style="left:671.9px;top:43px;font-size:7.2px;line-height:9px;color:#fff;transform:scaleX(0.878);">AutoSum</div>
<svg style="left:707.3px;top:47.02px;" width="3.2" height="1.76" viewBox="0 0 3.2 1.76"><path d="M0 0 L3.2 0 L1.6 1.76 Z" fill="#e4e4e4"/></svg>
<svg style="left:661px;top:56.4px;" width="8.8" height="9.4" viewBox="0 0 8.8 9.4"><rect x="0.5" y="0.5" width="7.8" height="8.2" fill="none" stroke="#eee" stroke-width="0.9"/><path d="M4.4 2 V6.2 M2.6 4.6 L4.4 6.4 L6.2 4.6" fill="none" stroke="#3a96dd" stroke-width="0.9"/></svg>
<div class="t" style="left:671.9px;top:57px;font-size:7.2px;line-height:9px;color:#fff;transform:scaleX(0.946);">Fill</div>
<svg style="left:680.9px;top:59.65px;" width="5" height="3.5" viewBox="0 0 5 3.5"><path d="M1 1 L2.5 2.5 L4 1" fill="none" stroke="#f2f2f2" stroke-width="0.95"/></svg>
<svg style="left:661px;top:70px;" width="9" height="9.6" viewBox="0 0 9 9.6"><path d="M0.8 5.6 L5 1 L8.4 3.6 L4.2 8.6 Z" fill="none" stroke="#d05ad0" stroke-width="1"/><path d="M0.8 5.6 L2.6 3.6 L6 6.4 L4.2 8.6 Z" fill="#d05ad0"/></svg>
<div class="t" style="left:671.9px;top:70px;font-size:7.2px;line-height:9px;color:#fff;transform:scaleX(0.843);">Clear</div>
<svg style="left:686.7px;top:73.25px;" width="5" height="3.5" viewBox="0 0 5 3.5"><path d="M1 1 L2.5 2.5 L4 1" fill="none" stroke="#f2f2f2" stroke-width="0.95"/></svg>
<svg style="left:719.5px;top:43.4px;" width="16" height="15.2" viewBox="0 0 16 15.2"><text x="0.6" y="6.6" font-size="8" fill="#3a96dd" font-family="Liberation Sans, sans-serif">A</text><text x="1" y="14.6" font-size="8" fill="#eee" font-family="Liberation Sans, sans-serif">Z</text><path d="M6.6 4.4 H15.2 L12 8 V11.6 H9.8 V8 Z" fill="none" stroke="#ddd" stroke-width="0.9"/></svg>
<div class="t" style="left:718.6px;top:61px;font-size:7.2px;line-height:9px;color:#fff;transform:scaleX(0.880);">Sort &amp;</div>
<div class="t" style="left:717.7px;top:69px;font-size:7.2px;line-height:9px;color:#fff;transform:scaleX(0.881);">Filter</div>
<svg style="left:732.1px;top:72.25px;" width="5" height="3.5" viewBox="0 0 5 3.5"><path d="M1 1 L2.5 2.5 L4 1" fill="none" stroke="#f2f2f2" stroke-width="0.95"/></svg>
<svg style="left:743.6px;top:43px;" width="16.4" height="16" viewBox="0 0 16.4 16"><circle cx="10.6" cy="5.8" r="5" fill="none" stroke="#ddd" stroke-width="0.9"/><path d="M7 9.4 L0.8 15.4" stroke="#ddd" stroke-width="0.9"/></svg>
<div class="t" style="left:742.4px;top:61px;font-size:7.2px;line-height:9px;color:#fff;transform:scaleX(0.908);">Find &amp;</div>
<div class="t" style="left:740.7px;top:69px;font-size:7.2px;line-height:9px;color:#fff;transform:scaleX(0.855);">Select</div>
<svg style="left:758.1px;top:72.25px;" width="5" height="3.5" viewBox="0 0 5 3.5"><path d="M1 1 L2.5 2.5 L4 1" fill="none" stroke="#f2f2f2" stroke-width="0.95"/></svg>
<svg style="left:781.5px;top:43px;" width="15" height="15.6" viewBox="0 0 15 15.6"><path d="M0.8 1 H9 M0.8 1 V14.4 H10.6 V9" fill="none" stroke="#6a6a6a" stroke-width="0.9"/><path d="M3 6.4 L6.6 9.6 L11 5 L7.6 1.6 Z" fill="#6a6a6a"/><path d="M8.6 1.2 Q11.4 -0.6 13.6 1.6 Q15.2 3.8 13 6.2" fill="none" stroke="#6a6a6a" stroke-width="1"/></svg>
<div class="t" style="left:773.9px;top:61px;font-size:7.2px;line-height:9px;color:#6e6e6e;transform:scaleX(0.855);">Sensitivity</div>
<svg style="left:785.2px;top:71.95px;" width="4.6" height="3.3" viewBox="0 0 4.6 3.3"><path d="M1 1 L2.3 2.3 L3.6 1" fill="none" stroke="#6e6e6e" stroke-width="0.95"/></svg>
<svg style="left:815.9px;top:43.2px;" width="15.4" height="15.4" viewBox="0 0 15.4 15.4"><rect x="0.5" y="0.5" width="14.4" height="14.4" fill="none" stroke="#d8501a" stroke-width="0.9"/><rect x="2.4" y="2.4" width="4.4" height="4.8" fill="none" stroke="#d8501a" stroke-width="0.8"/><rect x="8.6" y="2.4" width="4.4" height="4.8" fill="none" stroke="#d8501a" stroke-width="0.8"/><rect x="2.4" y="8.6" width="4.4" height="4.4" fill="none" stroke="#d8501a" stroke-width="0.8"/><rect x="8.6" y="8.6" width="4.4" height="4.4" fill="none" stroke="#d8501a" stroke-width="0.8"/></svg>
<div class="t" style="left:812.6px;top:61px;font-size:7.2px;line-height:9px;color:#fff;transform:scaleX(0.913);">Add-ins</div>
<svg style="left:848px;top:43.4px;" width="16.6" height="15.2" viewBox="0 0 16.6 15.2"><defs><linearGradient id="cg1" x1="0" y1="0" x2="0" y2="1"><stop offset="0" stop-color="#18a4f5"/><stop offset="0.5" stop-color="#30d090"/><stop offset="1" stop-color="#ffe418"/></linearGradient><linearGradient id="cg2" x1="0" y1="0" x2="0" y2="1"><stop offset="0" stop-color="#9a58f2"/><stop offset="0.5" stop-color="#f060b4"/><stop offset="1" stop-color="#ff8c30"/></linearGradient><linearGradient id="cg3" x1="0" y1="0" x2="1" y2="0"><stop offset="0" stop-color="#18a0f0"/><stop offset="1" stop-color="#2858e8"/></linearGradient><linearGradient id="cg4" x1="0" y1="0" x2="1" y2="0"><stop offset="0" stop-color="#f8b020"/><stop offset="1" stop-color="#f04838"/></linearGradient></defs><path d="M5.4 1.6 H12 Q13.6 1.6 14 3.4 L14.4 5.6 H10.4 Z" fill="url(#cg3)" stroke="url(#cg3)" stroke-width="1.6" stroke-linejoin="round"/><path d="M11.2 13.6 H4.8 Q3.2 13.6 2.8 11.8 L2.4 9.8 H6.2 Z" fill="url(#cg4)" stroke="url(#cg4)" stroke-width="1.6" stroke-linejoin="round"/><path d="M4.4 1.8 H8.2 L6 10 H1.8 Z" fill="url(#cg1)" stroke="url(#cg1)" stroke-width="2" stroke-linejoin="round"/><path d="M10.6 5.6 H14.6 L12.2 13.4 H8.2 Z" fill="url(#cg2)" stroke="url(#cg2)" stroke-width="2" stroke-linejoin="round"/></svg>
<div class="t" style="left:845.8px;top:61px;font-size:7.2px;line-height:9px;color:#fff;transform:scaleX(0.915);">Copilot</div>
<svg style="left:879px;top:42.2px;" width="16.9" height="16.9" viewBox="0 0 16.9 16.9"><rect width="16.9" height="16.9" fill="#e2602c"/><path d="M9.99 8.78 L14.16 9.28" stroke="#fff" stroke-width="0.95" stroke-linecap="round"/><path d="M9.7 9.5 L13.06 12.02" stroke="#fff" stroke-width="0.95" stroke-linecap="round"/><path d="M9.09 9.98 L10.74 13.84" stroke="#fff" stroke-width="0.95" stroke-linecap="round"/><path d="M8.32 10.09 L7.82 14.26" stroke="#fff" stroke-width="0.95" stroke-linecap="round"/><path d="M7.6 9.8 L5.08 13.16" stroke="#fff" stroke-width="0.95" stroke-linecap="round"/><path d="M7.12 9.19 L3.26 10.84" stroke="#fff" stroke-width="0.95" stroke-linecap="round"/><path d="M7.01 8.42 L2.84 7.92" stroke="#fff" stroke-width="0.95" stroke-linecap="round"/><path d="M7.3 7.7 L3.94 5.18" stroke="#fff" stroke-width="0.95" stroke-linecap="round"/><path d="M7.91 7.22 L6.26 3.36" stroke="#fff" stroke-width="0.95" stroke-linecap="round"/><path d="M8.68 7.11 L9.18 2.94" stroke="#fff" stroke-width="0.95" stroke-linecap="round"/><path d="M9.4 7.4 L11.92 4.04" stroke="#fff" stroke-width="0.95" stroke-linecap="round"/><path d="M9.88 8.01 L13.74 6.36" stroke="#fff" stroke-width="0.95" stroke-linecap="round"/><circle cx="8.5" cy="8.6" r="2.3" fill="#fff"/></svg>
<div class="t" style="left:877px;top:61px;font-size:7.2px;line-height:9px;color:#fff;transform:scaleX(0.872);">Claude</div>
<div style="left:0px;top:90px;width:1000px;height:22.6px;background:#0b0b0b;"></div>
<div style="left:-2px;top:95.2px;width:52px;height:13.8px;background:#262626;border:1px solid #525252;box-sizing:border-box;border-radius:2px;"></div>
<div class="t" style="left:0.7px;top:99px;font-size:6.8px;line-height:7px;color:#fff;transform:scaleX(0.854);">A1</div>
<svg style="left:40.9px;top:100.65px;" width="6.6" height="4.3" viewBox="0 0 6.6 4.3"><path d="M1 1 L3.3 3.3 L5.6 1" fill="none" stroke="#f0f0f0" stroke-width="1.05"/></svg>
<div style="left:55.3px;top:100.2px;width:0.8px;height:0.8px;background:#bbb;"></div>
<div style="left:55.3px;top:102.2px;width:0.8px;height:0.8px;background:#bbb;"></div>
<div style="left:55.3px;top:104.2px;width:0.8px;height:0.8px;background:#bbb;"></div>
<div style="left:61.1px;top:95.2px;width:44.9px;height:13.8px;background:#262626;border:1px solid #525252;box-sizing:border-box;border-radius:2px;"></div>
<svg style="left:64.2px;top:98.8px;" width="7" height="7" viewBox="0 0 7 7"><path d="M0.6 0.6 L6.2 6.2 M6.2 0.6 L0.6 6.2" stroke="#8c8c8c" stroke-width="0.85"/></svg>
<svg style="left:75.6px;top:98.8px;" width="9.4" height="7" viewBox="0 0 9.4 7"><path d="M0.6 3.8 L3 6.2 L8.6 0.8" fill="none" stroke="#8c8c8c" stroke-width="0.85"/></svg>
<div class="t" style="left:90.2px;top:98px;font-size:8px;line-height:9px;color:#fff;font-weight:bold;font-style:italic;font-family:'Liberation Serif',serif;transform:scaleX(1.110);">fx</div>
<svg style="left:98.8px;top:100.7px;" width="6.4" height="4.2" viewBox="0 0 6.4 4.2"><path d="M1 1 L3.2 3.2 L5.4 1" fill="none" stroke="#e8e8e8" stroke-width="1.0"/></svg>
<div style="left:108.2px;top:95.2px;width:888.3px;height:13.8px;background:#262626;border:1px solid #525252;box-sizing:border-box;border-radius:2px;"></div>
<svg style="left:988.3px;top:100.5px;" width="6.4" height="4.2" viewBox="0 0 6.4 4.2"><path d="M1 1 L3.2 3.2 L5.4 1" fill="none" stroke="#e8e8e8" stroke-width="1.0"/></svg>
<div style="left:0px;top:515.8px;width:1000px;height:15.5px;background:#0b0b0b;"></div>
<div style="left:0px;top:531.3px;width:1000px;height:11.7px;background:#1b1b1b;"></div>
<svg style="left:7.4px;top:520.6px;" width="4" height="6.4" viewBox="0 0 4 6.4"><path d="M3.2 0.6 L0.8 3.2 L3.2 5.8" fill="none" stroke="#999" stroke-width="0.8"/></svg>
<svg style="left:24.4px;top:520.6px;" width="4" height="6.4" viewBox="0 0 4 6.4"><path d="M0.8 0.6 L3.2 3.2 L0.8 5.8" fill="none" stroke="#999" stroke-width="0.8"/></svg>
<div style="left:53.3px;top:515.8px;width:36px;height:14.4px;background:#fff;border-radius:0 0 3px 3px;"></div>
<div class="t" style="left:58.2px;top:518px;font-size:7.4px;line-height:9px;color:#1a1a1a;transform:scaleX(0.936);">Analysis</div>
<div style="left:57.8px;top:527.7px;width:27px;height:1.2px;background:#1e7a3c;border-radius:0.5px;"></div>
<div class="t" style="left:98.2px;top:519px;font-size:7.4px;line-height:9px;color:#f0f0f0;transform:scaleX(0.967);">Dashboard</div>
<div class="t" style="left:147.5px;top:519px;font-size:7.4px;line-height:9px;color:#f0f0f0;transform:scaleX(0.966);">Demo Orders Data</div>
<div class="t" style="left:223.5px;top:519px;font-size:7.4px;line-height:9px;color:#f0f0f0;transform:scaleX(0.771);">KPIS</div>
<div style="left:91.4px;top:518.4px;width:0.8px;height:10px;background:#4a4a4a;"></div>
<div style="left:139.8px;top:518.4px;width:0.8px;height:10px;background:#4a4a4a;"></div>
<div style="left:216.1px;top:518.4px;width:0.8px;height:10px;background:#4a4a4a;"></div>
<div style="left:243.6px;top:518.4px;width:0.8px;height:10px;background:#4a4a4a;"></div>
<svg style="left:265.5px;top:520.4px;" width="6" height="6" viewBox="0 0 6 6"><path d="M3 0.4 V5.6 M0.4 3 H5.6" stroke="#bbb" stroke-width="0.8"/></svg>
<div style="left:598.6px;top:521.2px;width:0.8px;height:0.8px;background:#bbb;"></div>
<div style="left:598.6px;top:523.2px;width:0.8px;height:0.8px;background:#bbb;"></div>
<div style="left:598.6px;top:525.2px;width:0.8px;height:0.8px;background:#bbb;"></div>
<svg style="left:609.6px;top:520.8px;" width="4" height="5.6" viewBox="0 0 4 5.6"><path d="M3.4 0.4 L0.6 2.8 L3.4 5.2 Z" fill="#bbb"/></svg>
<div style="left:616px;top:521.2px;width:360.5px;height:4.8px;background:#a6a6a6;border-radius:2.4px;"></div>
<svg style="left:984px;top:520.8px;" width="4" height="5.6" viewBox="0 0 4 5.6"><path d="M0.6 0.4 L3.4 2.8 L0.6 5.2 Z" fill="#bbb"/></svg>
<div class="t" style="left:-0.6px;top:535px;font-size:6.4px;line-height:7px;color:#f0f0f0;transform:scaleX(0.827);">Ready</div>
<svg style="left:25px;top:534.4px;" width="7.6" height="8" viewBox="0 0 7.6 8"><circle cx="3.8" cy="1.4" r="1" fill="#eee"/><path d="M0.6 3 H7 M3.8 3 V5 M3.8 5 L1.8 7.6 M3.8 5 L5.8 7.6" fill="none" stroke="#eee" stroke-width="0.8"/></svg>
<div class="t" style="left:34.8px;top:535px;font-size:6.4px;line-height:7px;color:#f0f0f0;transform:scaleX(0.952);">Accessibility: Investigate</div>
<div style="left:842.5px;top:531.8px;width:21.3px;height:11.2px;background:#353535;"></div>
<svg style="left:848.5px;top:534.4px;" width="8" height="7.4" viewBox="0 0 8 7.4"><rect x="0.6" y="0.6" width="6.8" height="6" fill="none" stroke="#eee" stroke-width="0.8"/><path d="M2.8 0.6 V6.6 M5.1 0.6 V6.6" stroke="#eee" stroke-width="0.6"/></svg>
<svg style="left:870px;top:534.4px;" width="8" height="7.4" viewBox="0 0 8 7.4"><rect x="0.6" y="0.6" width="6.8" height="6" fill="none" stroke="#bbb" stroke-width="0.8"/><rect x="2.2" y="1.8" width="1.4" height="3.6" fill="none" stroke="#bbb" stroke-width="0.5"/><rect x="4.6" y="1.8" width="1.4" height="3.6" fill="none" stroke="#bbb" stroke-width="0.5"/></svg>
<svg style="left:891px;top:534.4px;" width="8" height="7.4" viewBox="0 0 8 7.4"><rect x="0.6" y="0.6" width="6.8" height="6" fill="none" stroke="#bbb" stroke-width="0.8"/><path d="M2.6 0.6 V4 H5.4 V0.6" fill="none" stroke="#bbb" stroke-width="0.7"/></svg>
<div style="left:909.4px;top:537.8px;width:3.2px;height:0.7px;background:#aaa;"></div>
<div style="left:916px;top:537.8px;width:53px;height:0.7px;background:#9a9a9a;"></div>
<div style="left:942.2px;top:536.4px;width:0.7px;height:3.6px;background:#9a9a9a;"></div>
<div style="left:933.2px;top:535.2px;width:1.6px;height:6px;background:#ddd;"></div>
<svg style="left:970.5px;top:536px;" width="4" height="4.4" viewBox="0 0 4 4.4"><path d="M2 0.2 V4 M0.2 2.1 H3.8" stroke="#aaa" stroke-width="0.7"/></svg>
<div class="t" style="left:981.5px;top:535px;font-size:6.2px;line-height:7px;color:#f0f0f0;">70%</div>
</div></body></html>
